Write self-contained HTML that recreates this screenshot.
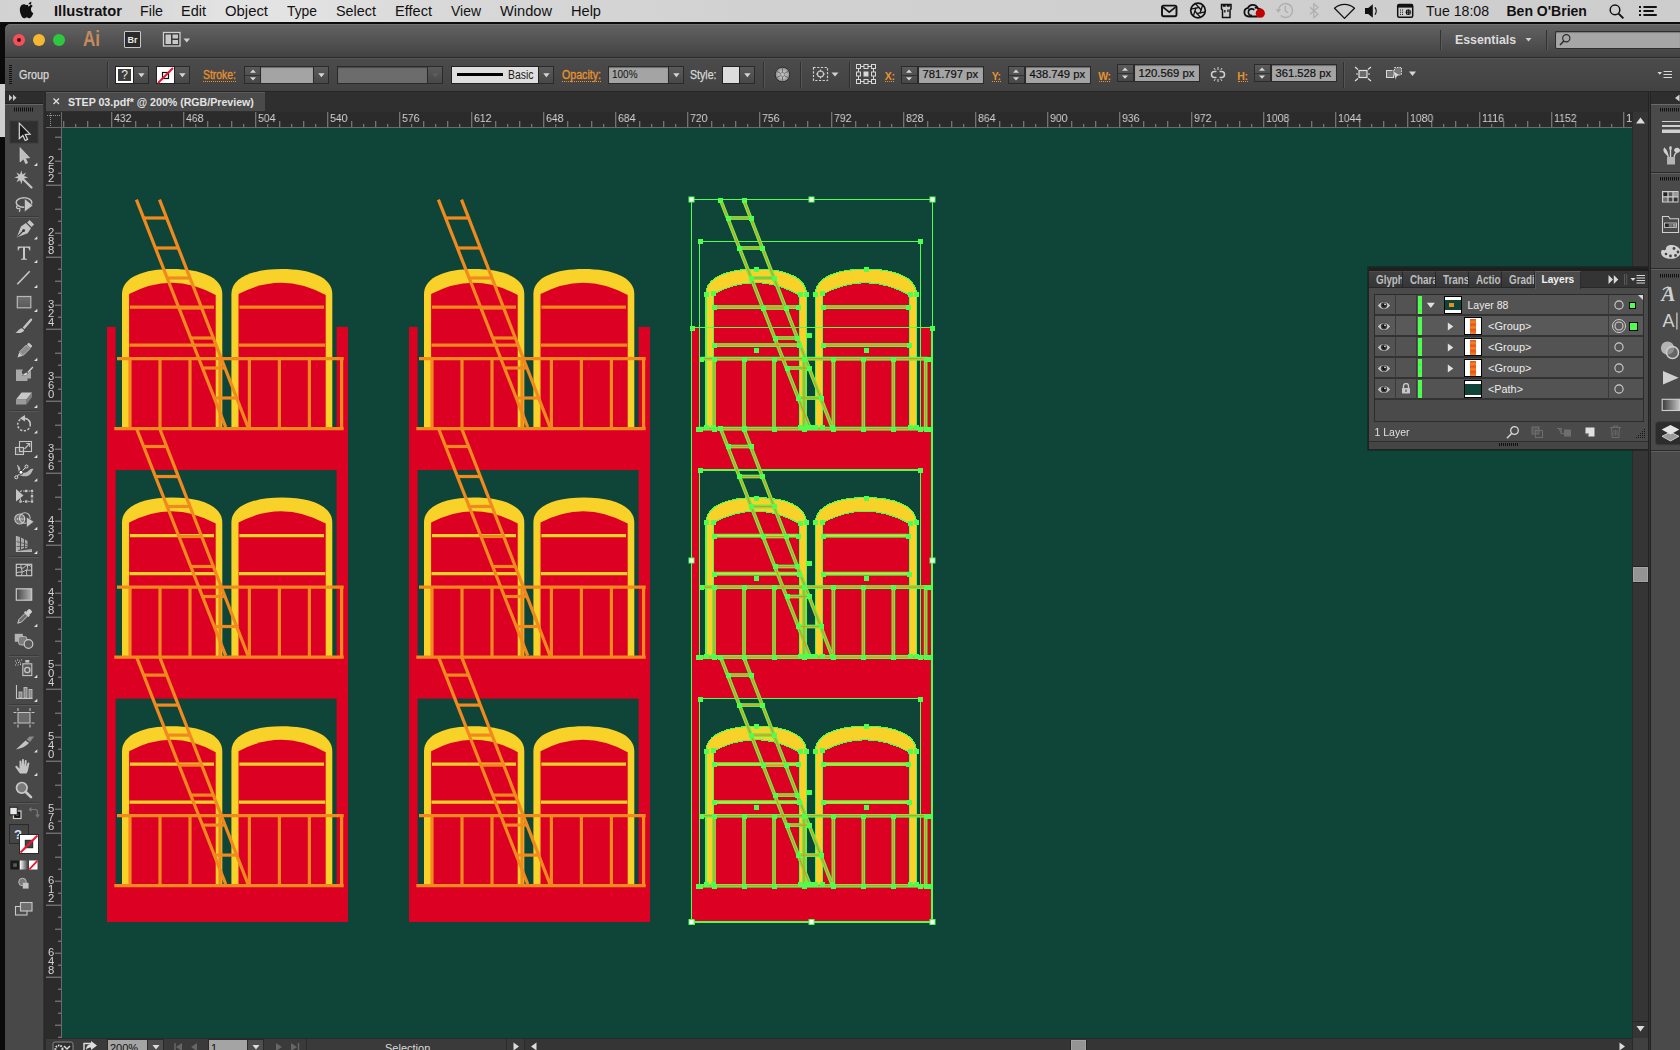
<!DOCTYPE html><html><head><meta charset="utf-8"><title>Illustrator</title><style>
*{box-sizing:border-box;margin:0;padding:0}
html,body{width:1680px;height:1050px;overflow:hidden;background:#000;font-family:"Liberation Sans",sans-serif;}
.a{position:absolute}
#menubar{left:0;top:0;width:1680px;height:24px;background:linear-gradient(90deg,#d2d2d2 0%,#d6d6d6 8%,#e2e2e2 13%,#e3e3e3 18%,#d9d9d9 25%,#d1d1d1 45%,#cdcdcd 100%);border-bottom:2px solid #0c0c0c}
#menubar span{position:absolute;top:2px;font-size:15px;color:#1a1a1a;white-space:nowrap;line-height:18px}
#appbar{left:5px;top:24px;width:1675px;height:34px;background:linear-gradient(#626262,#424242);border-top:1px solid #727272;border-bottom:1px solid #2a2a2a;border-top-left-radius:5px}
#ctrl{left:5px;top:58px;width:1675px;height:34px;background:linear-gradient(#4b4b4b,#424242);border-top:1px solid #555;border-bottom:1px solid #262626}
#tools{left:5px;top:92px;width:39px;height:958px;background:#484848}
#tabbar{left:46px;top:92px;width:1602px;height:20px;background:#2f2f2f}
#doctab{left:46px;top:92px;width:219px;height:19px;background:#4a4a4a;border-top:1px solid #5c5c5c}
#canvas{left:62px;top:128px;width:1570px;height:910px;background:#0f4538}
#hruler{left:46px;top:112px;width:1586px;height:16px;background:#2b2b2b;border-bottom:1px solid #6a6a6a}
#vruler{left:46px;top:128px;width:16px;height:910px;background:#2b2b2b;border-right:1px solid #6a6a6a}
#vscroll{left:1632px;top:112px;width:16px;height:926px;background:#353535}
#status{left:46px;top:1038px;width:1602px;height:12px;background:#3a3a3a}
#dock{left:1651px;top:104px;width:29px;height:946px;background:#4a4a4a;border-top:1px solid #6a6a6a}
.t{position:absolute;white-space:nowrap}
</style></head><body>
<div class="a" style="left:0;top:23px;width:5px;height:1027px;background:#0a0a0a"></div>
<div class="a" style="left:0;top:84px;width:5px;height:53px;background:#cfcfcf"></div>
<div class="a" style="left:44px;top:92px;width:2px;height:958px;background:#2a2a2a"></div>
<div class="a" style="left:1648px;top:92px;width:32px;height:958px;background:#2c2c2c"></div>
<div class="a" style="left:1648px;top:92px;width:3px;height:958px;background:#232323;z-index:3"></div><div class="a" style="left:1649px;top:92px;width:1px;height:958px;background:#333;z-index:3"></div>
<div id="menubar" class="a"></div>
<div id="appbar" class="a"></div>
<div id="ctrl" class="a"></div>
<div id="tools" class="a"></div>
<div id="tabbar" class="a"></div>
<div id="doctab" class="a"></div>
<div id="hruler" class="a"></div>
<div id="vruler" class="a"></div>
<div id="canvas" class="a"></div>
<div id="vscroll" class="a"></div>
<div id="status" class="a"></div>
<div id="dock" class="a"></div>
<svg class="a" style="left:62px;top:128px" width="1570" height="910" viewBox="62 128 1570 910" shape-rendering="auto">
<rect x="107" y="326.9" width="241" height="595.1" fill="#dc0023"/><rect x="115.6" y="241.4" width="221" height="187.2" fill="#0f4538"/><rect x="115.6" y="470" width="221" height="187.1" fill="#0f4538"/><rect x="115.6" y="698.6" width="221" height="187.1" fill="#0f4538"/><path d="M122,427.4 L122,294.1 C122,277.1 144.1,269.1 172.2,269.1 C200.2,269.1 222.3,277.1 222.3,294.1 L222.3,427.4 Z" fill="#f8d228"/><path d="M129.1,427.4 L129.1,294.1 Q172.4,270.7 215.7,295.1 L215.7,427.4 Z" fill="#dc0023"/><path d="M231.4,427.4 L231.4,294.1 C231.4,277.1 253.6,269.1 281.9,269.1 C310.1,269.1 332.3,277.1 332.3,294.1 L332.3,427.4 Z" fill="#f8d228"/><path d="M238.5,427.4 L238.5,294.1 Q282.1,270.7 325.7,295.1 L325.7,427.4 Z" fill="#dc0023"/><path d="M122,655.9 L122,522.6 C122,505.6 144.1,497.6 172.2,497.6 C200.2,497.6 222.3,505.6 222.3,522.6 L222.3,655.9 Z" fill="#f8d228"/><path d="M129.1,655.9 L129.1,522.6 Q172.4,499.2 215.7,523.6 L215.7,655.9 Z" fill="#dc0023"/><path d="M231.4,655.9 L231.4,522.6 C231.4,505.6 253.6,497.6 281.9,497.6 C310.1,497.6 332.3,505.6 332.3,522.6 L332.3,655.9 Z" fill="#f8d228"/><path d="M238.5,655.9 L238.5,522.6 Q282.1,499.2 325.7,523.6 L325.7,655.9 Z" fill="#dc0023"/><path d="M122,884.5 L122,751.2 C122,734.2 144.1,726.2 172.2,726.2 C200.2,726.2 222.3,734.2 222.3,751.2 L222.3,884.5 Z" fill="#f8d228"/><path d="M129.1,884.5 L129.1,751.2 Q172.4,727.8 215.7,752.2 L215.7,884.5 Z" fill="#dc0023"/><path d="M231.4,884.5 L231.4,751.2 C231.4,734.2 253.6,726.2 281.9,726.2 C310.1,726.2 332.3,734.2 332.3,751.2 L332.3,884.5 Z" fill="#f8d228"/><path d="M238.5,884.5 L238.5,751.2 Q282.1,727.8 325.7,752.2 L325.7,884.5 Z" fill="#dc0023"/><line x1="130" y1="307.1" x2="214" y2="307.1" stroke="#f08a1e" stroke-width="3.2"/><line x1="129.5" y1="345.1" x2="215.3" y2="345.1" stroke="#f08a1e" stroke-width="3.2"/><line x1="239.4" y1="307.1" x2="324" y2="307.1" stroke="#f08a1e" stroke-width="3.2"/><line x1="238.9" y1="345.1" x2="325.3" y2="345.1" stroke="#f08a1e" stroke-width="3.2"/><line x1="117" y1="358.6" x2="343.7" y2="358.6" stroke="#f08a1e" stroke-width="3.2"/><line x1="114.3" y1="428.6" x2="343.7" y2="428.6" stroke="#f08a1e" stroke-width="3.2"/><line x1="130" y1="358.6" x2="130" y2="428.6" stroke="#f08a1e" stroke-width="3.2"/><line x1="160" y1="358.6" x2="160" y2="428.6" stroke="#f08a1e" stroke-width="3.2"/><line x1="190" y1="358.6" x2="190" y2="428.6" stroke="#f08a1e" stroke-width="3.2"/><line x1="220" y1="358.6" x2="220" y2="428.6" stroke="#f08a1e" stroke-width="3.2"/><line x1="249.4" y1="358.6" x2="249.4" y2="428.6" stroke="#f08a1e" stroke-width="3.2"/><line x1="279.4" y1="358.6" x2="279.4" y2="428.6" stroke="#f08a1e" stroke-width="3.2"/><line x1="309.4" y1="358.6" x2="309.4" y2="428.6" stroke="#f08a1e" stroke-width="3.2"/><line x1="341.6" y1="358.6" x2="341.6" y2="428.6" stroke="#f08a1e" stroke-width="3.2"/><line x1="136.4" y1="199.6" x2="225.7" y2="427.1" stroke="#f08a1e" stroke-width="3.2"/><line x1="159.5" y1="199.6" x2="248" y2="427.1" stroke="#f08a1e" stroke-width="3.2"/><line x1="143.6" y1="218" x2="166.7" y2="218" stroke="#f08a1e" stroke-width="3.2"/><line x1="155.4" y1="248" x2="178.3" y2="248" stroke="#f08a1e" stroke-width="3.2"/><line x1="167.2" y1="278" x2="190" y2="278" stroke="#f08a1e" stroke-width="3.2"/><line x1="178.9" y1="308" x2="201.7" y2="308" stroke="#f08a1e" stroke-width="3.2"/><line x1="190.7" y1="338" x2="213.3" y2="338" stroke="#f08a1e" stroke-width="3.2"/><line x1="202.5" y1="368" x2="225" y2="368" stroke="#f08a1e" stroke-width="3.2"/><line x1="214.3" y1="398" x2="236.7" y2="398" stroke="#f08a1e" stroke-width="3.2"/><line x1="130" y1="535.6" x2="214" y2="535.6" stroke="#f8d228" stroke-width="3.2"/><line x1="129.5" y1="573.6" x2="215.3" y2="573.6" stroke="#f8d228" stroke-width="3.2"/><line x1="239.4" y1="535.6" x2="324" y2="535.6" stroke="#f8d228" stroke-width="3.2"/><line x1="238.9" y1="573.6" x2="325.3" y2="573.6" stroke="#f8d228" stroke-width="3.2"/><line x1="117" y1="587.1" x2="343.7" y2="587.1" stroke="#f08a1e" stroke-width="3.2"/><line x1="114.3" y1="657.1" x2="343.7" y2="657.1" stroke="#f08a1e" stroke-width="3.2"/><line x1="130" y1="587.1" x2="130" y2="657.1" stroke="#f08a1e" stroke-width="3.2"/><line x1="160" y1="587.1" x2="160" y2="657.1" stroke="#f08a1e" stroke-width="3.2"/><line x1="190" y1="587.1" x2="190" y2="657.1" stroke="#f08a1e" stroke-width="3.2"/><line x1="220" y1="587.1" x2="220" y2="657.1" stroke="#f08a1e" stroke-width="3.2"/><line x1="249.4" y1="587.1" x2="249.4" y2="657.1" stroke="#f08a1e" stroke-width="3.2"/><line x1="279.4" y1="587.1" x2="279.4" y2="657.1" stroke="#f08a1e" stroke-width="3.2"/><line x1="309.4" y1="587.1" x2="309.4" y2="657.1" stroke="#f08a1e" stroke-width="3.2"/><line x1="341.6" y1="587.1" x2="341.6" y2="657.1" stroke="#f08a1e" stroke-width="3.2"/><line x1="136.4" y1="428.1" x2="225.7" y2="655.6" stroke="#f08a1e" stroke-width="3.2"/><line x1="159.5" y1="428.1" x2="248" y2="655.6" stroke="#f08a1e" stroke-width="3.2"/><line x1="143.6" y1="446.5" x2="166.7" y2="446.5" stroke="#f08a1e" stroke-width="3.2"/><line x1="155.4" y1="476.5" x2="178.3" y2="476.5" stroke="#f08a1e" stroke-width="3.2"/><line x1="167.2" y1="506.5" x2="190" y2="506.5" stroke="#f08a1e" stroke-width="3.2"/><line x1="178.9" y1="536.5" x2="201.7" y2="536.5" stroke="#f08a1e" stroke-width="3.2"/><line x1="190.7" y1="566.5" x2="213.3" y2="566.5" stroke="#f08a1e" stroke-width="3.2"/><line x1="202.5" y1="596.5" x2="225" y2="596.5" stroke="#f08a1e" stroke-width="3.2"/><line x1="214.3" y1="626.5" x2="236.7" y2="626.5" stroke="#f08a1e" stroke-width="3.2"/><line x1="130" y1="764.2" x2="214" y2="764.2" stroke="#f8d228" stroke-width="3.2"/><line x1="129.5" y1="802.2" x2="215.3" y2="802.2" stroke="#f8d228" stroke-width="3.2"/><line x1="239.4" y1="764.2" x2="324" y2="764.2" stroke="#f8d228" stroke-width="3.2"/><line x1="238.9" y1="802.2" x2="325.3" y2="802.2" stroke="#f8d228" stroke-width="3.2"/><line x1="117" y1="815.7" x2="343.7" y2="815.7" stroke="#f08a1e" stroke-width="3.2"/><line x1="114.3" y1="885.7" x2="343.7" y2="885.7" stroke="#f08a1e" stroke-width="3.2"/><line x1="130" y1="815.7" x2="130" y2="885.7" stroke="#f08a1e" stroke-width="3.2"/><line x1="160" y1="815.7" x2="160" y2="885.7" stroke="#f08a1e" stroke-width="3.2"/><line x1="190" y1="815.7" x2="190" y2="885.7" stroke="#f08a1e" stroke-width="3.2"/><line x1="220" y1="815.7" x2="220" y2="885.7" stroke="#f08a1e" stroke-width="3.2"/><line x1="249.4" y1="815.7" x2="249.4" y2="885.7" stroke="#f08a1e" stroke-width="3.2"/><line x1="279.4" y1="815.7" x2="279.4" y2="885.7" stroke="#f08a1e" stroke-width="3.2"/><line x1="309.4" y1="815.7" x2="309.4" y2="885.7" stroke="#f08a1e" stroke-width="3.2"/><line x1="341.6" y1="815.7" x2="341.6" y2="885.7" stroke="#f08a1e" stroke-width="3.2"/><line x1="136.4" y1="656.7" x2="225.7" y2="884.2" stroke="#f08a1e" stroke-width="3.2"/><line x1="159.5" y1="656.7" x2="248" y2="884.2" stroke="#f08a1e" stroke-width="3.2"/><line x1="143.6" y1="675.1" x2="166.7" y2="675.1" stroke="#f08a1e" stroke-width="3.2"/><line x1="155.4" y1="705.1" x2="178.3" y2="705.1" stroke="#f08a1e" stroke-width="3.2"/><line x1="167.2" y1="735.1" x2="190" y2="735.1" stroke="#f08a1e" stroke-width="3.2"/><line x1="178.9" y1="765.1" x2="201.7" y2="765.1" stroke="#f08a1e" stroke-width="3.2"/><line x1="190.7" y1="795.1" x2="213.3" y2="795.1" stroke="#f08a1e" stroke-width="3.2"/><line x1="202.5" y1="825.1" x2="225" y2="825.1" stroke="#f08a1e" stroke-width="3.2"/><line x1="214.3" y1="855.1" x2="236.7" y2="855.1" stroke="#f08a1e" stroke-width="3.2"/>
<rect x="409" y="326.9" width="241" height="595.1" fill="#dc0023"/><rect x="417.6" y="241.4" width="221" height="187.2" fill="#0f4538"/><rect x="417.6" y="470" width="221" height="187.1" fill="#0f4538"/><rect x="417.6" y="698.6" width="221" height="187.1" fill="#0f4538"/><path d="M424,427.4 L424,294.1 C424,277.1 446.1,269.1 474.1,269.1 C502.2,269.1 524.3,277.1 524.3,294.1 L524.3,427.4 Z" fill="#f8d228"/><path d="M431.1,427.4 L431.1,294.1 Q474.4,270.7 517.7,295.1 L517.7,427.4 Z" fill="#dc0023"/><path d="M533.4,427.4 L533.4,294.1 C533.4,277.1 555.6,269.1 583.8,269.1 C612.1,269.1 634.3,277.1 634.3,294.1 L634.3,427.4 Z" fill="#f8d228"/><path d="M540.5,427.4 L540.5,294.1 Q584.1,270.7 627.7,295.1 L627.7,427.4 Z" fill="#dc0023"/><path d="M424,655.9 L424,522.6 C424,505.6 446.1,497.6 474.1,497.6 C502.2,497.6 524.3,505.6 524.3,522.6 L524.3,655.9 Z" fill="#f8d228"/><path d="M431.1,655.9 L431.1,522.6 Q474.4,499.2 517.7,523.6 L517.7,655.9 Z" fill="#dc0023"/><path d="M533.4,655.9 L533.4,522.6 C533.4,505.6 555.6,497.6 583.8,497.6 C612.1,497.6 634.3,505.6 634.3,522.6 L634.3,655.9 Z" fill="#f8d228"/><path d="M540.5,655.9 L540.5,522.6 Q584.1,499.2 627.7,523.6 L627.7,655.9 Z" fill="#dc0023"/><path d="M424,884.5 L424,751.2 C424,734.2 446.1,726.2 474.1,726.2 C502.2,726.2 524.3,734.2 524.3,751.2 L524.3,884.5 Z" fill="#f8d228"/><path d="M431.1,884.5 L431.1,751.2 Q474.4,727.8 517.7,752.2 L517.7,884.5 Z" fill="#dc0023"/><path d="M533.4,884.5 L533.4,751.2 C533.4,734.2 555.6,726.2 583.8,726.2 C612.1,726.2 634.3,734.2 634.3,751.2 L634.3,884.5 Z" fill="#f8d228"/><path d="M540.5,884.5 L540.5,751.2 Q584.1,727.8 627.7,752.2 L627.7,884.5 Z" fill="#dc0023"/><line x1="432" y1="307.1" x2="516" y2="307.1" stroke="#f08a1e" stroke-width="3.2"/><line x1="431.5" y1="345.1" x2="517.3" y2="345.1" stroke="#f08a1e" stroke-width="3.2"/><line x1="541.4" y1="307.1" x2="626" y2="307.1" stroke="#f08a1e" stroke-width="3.2"/><line x1="540.9" y1="345.1" x2="627.3" y2="345.1" stroke="#f08a1e" stroke-width="3.2"/><line x1="419" y1="358.6" x2="645.7" y2="358.6" stroke="#f08a1e" stroke-width="3.2"/><line x1="416.3" y1="428.6" x2="645.7" y2="428.6" stroke="#f08a1e" stroke-width="3.2"/><line x1="432" y1="358.6" x2="432" y2="428.6" stroke="#f08a1e" stroke-width="3.2"/><line x1="462" y1="358.6" x2="462" y2="428.6" stroke="#f08a1e" stroke-width="3.2"/><line x1="492" y1="358.6" x2="492" y2="428.6" stroke="#f08a1e" stroke-width="3.2"/><line x1="522" y1="358.6" x2="522" y2="428.6" stroke="#f08a1e" stroke-width="3.2"/><line x1="551.4" y1="358.6" x2="551.4" y2="428.6" stroke="#f08a1e" stroke-width="3.2"/><line x1="581.4" y1="358.6" x2="581.4" y2="428.6" stroke="#f08a1e" stroke-width="3.2"/><line x1="611.4" y1="358.6" x2="611.4" y2="428.6" stroke="#f08a1e" stroke-width="3.2"/><line x1="643.6" y1="358.6" x2="643.6" y2="428.6" stroke="#f08a1e" stroke-width="3.2"/><line x1="438.4" y1="199.6" x2="527.7" y2="427.1" stroke="#f08a1e" stroke-width="3.2"/><line x1="461.5" y1="199.6" x2="550" y2="427.1" stroke="#f08a1e" stroke-width="3.2"/><line x1="445.6" y1="218" x2="468.7" y2="218" stroke="#f08a1e" stroke-width="3.2"/><line x1="457.4" y1="248" x2="480.3" y2="248" stroke="#f08a1e" stroke-width="3.2"/><line x1="469.2" y1="278" x2="492" y2="278" stroke="#f08a1e" stroke-width="3.2"/><line x1="480.9" y1="308" x2="503.7" y2="308" stroke="#f08a1e" stroke-width="3.2"/><line x1="492.7" y1="338" x2="515.3" y2="338" stroke="#f08a1e" stroke-width="3.2"/><line x1="504.5" y1="368" x2="527" y2="368" stroke="#f08a1e" stroke-width="3.2"/><line x1="516.3" y1="398" x2="538.7" y2="398" stroke="#f08a1e" stroke-width="3.2"/><line x1="432" y1="535.6" x2="516" y2="535.6" stroke="#f8d228" stroke-width="3.2"/><line x1="431.5" y1="573.6" x2="517.3" y2="573.6" stroke="#f8d228" stroke-width="3.2"/><line x1="541.4" y1="535.6" x2="626" y2="535.6" stroke="#f8d228" stroke-width="3.2"/><line x1="540.9" y1="573.6" x2="627.3" y2="573.6" stroke="#f8d228" stroke-width="3.2"/><line x1="419" y1="587.1" x2="645.7" y2="587.1" stroke="#f08a1e" stroke-width="3.2"/><line x1="416.3" y1="657.1" x2="645.7" y2="657.1" stroke="#f08a1e" stroke-width="3.2"/><line x1="432" y1="587.1" x2="432" y2="657.1" stroke="#f08a1e" stroke-width="3.2"/><line x1="462" y1="587.1" x2="462" y2="657.1" stroke="#f08a1e" stroke-width="3.2"/><line x1="492" y1="587.1" x2="492" y2="657.1" stroke="#f08a1e" stroke-width="3.2"/><line x1="522" y1="587.1" x2="522" y2="657.1" stroke="#f08a1e" stroke-width="3.2"/><line x1="551.4" y1="587.1" x2="551.4" y2="657.1" stroke="#f08a1e" stroke-width="3.2"/><line x1="581.4" y1="587.1" x2="581.4" y2="657.1" stroke="#f08a1e" stroke-width="3.2"/><line x1="611.4" y1="587.1" x2="611.4" y2="657.1" stroke="#f08a1e" stroke-width="3.2"/><line x1="643.6" y1="587.1" x2="643.6" y2="657.1" stroke="#f08a1e" stroke-width="3.2"/><line x1="438.4" y1="428.1" x2="527.7" y2="655.6" stroke="#f08a1e" stroke-width="3.2"/><line x1="461.5" y1="428.1" x2="550" y2="655.6" stroke="#f08a1e" stroke-width="3.2"/><line x1="445.6" y1="446.5" x2="468.7" y2="446.5" stroke="#f08a1e" stroke-width="3.2"/><line x1="457.4" y1="476.5" x2="480.3" y2="476.5" stroke="#f08a1e" stroke-width="3.2"/><line x1="469.2" y1="506.5" x2="492" y2="506.5" stroke="#f08a1e" stroke-width="3.2"/><line x1="480.9" y1="536.5" x2="503.7" y2="536.5" stroke="#f08a1e" stroke-width="3.2"/><line x1="492.7" y1="566.5" x2="515.3" y2="566.5" stroke="#f08a1e" stroke-width="3.2"/><line x1="504.5" y1="596.5" x2="527" y2="596.5" stroke="#f08a1e" stroke-width="3.2"/><line x1="516.3" y1="626.5" x2="538.7" y2="626.5" stroke="#f08a1e" stroke-width="3.2"/><line x1="432" y1="764.2" x2="516" y2="764.2" stroke="#f8d228" stroke-width="3.2"/><line x1="431.5" y1="802.2" x2="517.3" y2="802.2" stroke="#f8d228" stroke-width="3.2"/><line x1="541.4" y1="764.2" x2="626" y2="764.2" stroke="#f8d228" stroke-width="3.2"/><line x1="540.9" y1="802.2" x2="627.3" y2="802.2" stroke="#f8d228" stroke-width="3.2"/><line x1="419" y1="815.7" x2="645.7" y2="815.7" stroke="#f08a1e" stroke-width="3.2"/><line x1="416.3" y1="885.7" x2="645.7" y2="885.7" stroke="#f08a1e" stroke-width="3.2"/><line x1="432" y1="815.7" x2="432" y2="885.7" stroke="#f08a1e" stroke-width="3.2"/><line x1="462" y1="815.7" x2="462" y2="885.7" stroke="#f08a1e" stroke-width="3.2"/><line x1="492" y1="815.7" x2="492" y2="885.7" stroke="#f08a1e" stroke-width="3.2"/><line x1="522" y1="815.7" x2="522" y2="885.7" stroke="#f08a1e" stroke-width="3.2"/><line x1="551.4" y1="815.7" x2="551.4" y2="885.7" stroke="#f08a1e" stroke-width="3.2"/><line x1="581.4" y1="815.7" x2="581.4" y2="885.7" stroke="#f08a1e" stroke-width="3.2"/><line x1="611.4" y1="815.7" x2="611.4" y2="885.7" stroke="#f08a1e" stroke-width="3.2"/><line x1="643.6" y1="815.7" x2="643.6" y2="885.7" stroke="#f08a1e" stroke-width="3.2"/><line x1="438.4" y1="656.7" x2="527.7" y2="884.2" stroke="#f08a1e" stroke-width="3.2"/><line x1="461.5" y1="656.7" x2="550" y2="884.2" stroke="#f08a1e" stroke-width="3.2"/><line x1="445.6" y1="675.1" x2="468.7" y2="675.1" stroke="#f08a1e" stroke-width="3.2"/><line x1="457.4" y1="705.1" x2="480.3" y2="705.1" stroke="#f08a1e" stroke-width="3.2"/><line x1="469.2" y1="735.1" x2="492" y2="735.1" stroke="#f08a1e" stroke-width="3.2"/><line x1="480.9" y1="765.1" x2="503.7" y2="765.1" stroke="#f08a1e" stroke-width="3.2"/><line x1="492.7" y1="795.1" x2="515.3" y2="795.1" stroke="#f08a1e" stroke-width="3.2"/><line x1="504.5" y1="825.1" x2="527" y2="825.1" stroke="#f08a1e" stroke-width="3.2"/><line x1="516.3" y1="855.1" x2="538.7" y2="855.1" stroke="#f08a1e" stroke-width="3.2"/>
<rect x="691" y="326.9" width="241" height="595.1" fill="#dc0023"/><rect x="699.6" y="241.4" width="221" height="187.2" fill="#0f4538"/><rect x="699.6" y="470" width="221" height="187.1" fill="#0f4538"/><rect x="699.6" y="698.6" width="221" height="187.1" fill="#0f4538"/><path d="M706,427.4 L706,294.1 C706,277.1 728.1,269.1 756.1,269.1 C784.2,269.1 806.3,277.1 806.3,294.1 L806.3,427.4 Z" fill="#f8d228"/><path d="M713.1,427.4 L713.1,294.1 Q756.4,270.7 799.7,295.1 L799.7,427.4 Z" fill="#dc0023"/><path d="M815.4,427.4 L815.4,294.1 C815.4,277.1 837.6,269.1 865.8,269.1 C894.1,269.1 916.3,277.1 916.3,294.1 L916.3,427.4 Z" fill="#f8d228"/><path d="M822.5,427.4 L822.5,294.1 Q866.1,270.7 909.7,295.1 L909.7,427.4 Z" fill="#dc0023"/><path d="M706,655.9 L706,522.6 C706,505.6 728.1,497.6 756.1,497.6 C784.2,497.6 806.3,505.6 806.3,522.6 L806.3,655.9 Z" fill="#f8d228"/><path d="M713.1,655.9 L713.1,522.6 Q756.4,499.2 799.7,523.6 L799.7,655.9 Z" fill="#dc0023"/><path d="M815.4,655.9 L815.4,522.6 C815.4,505.6 837.6,497.6 865.8,497.6 C894.1,497.6 916.3,505.6 916.3,522.6 L916.3,655.9 Z" fill="#f8d228"/><path d="M822.5,655.9 L822.5,522.6 Q866.1,499.2 909.7,523.6 L909.7,655.9 Z" fill="#dc0023"/><path d="M706,884.5 L706,751.2 C706,734.2 728.1,726.2 756.1,726.2 C784.2,726.2 806.3,734.2 806.3,751.2 L806.3,884.5 Z" fill="#f8d228"/><path d="M713.1,884.5 L713.1,751.2 Q756.4,727.8 799.7,752.2 L799.7,884.5 Z" fill="#dc0023"/><path d="M815.4,884.5 L815.4,751.2 C815.4,734.2 837.6,726.2 865.8,726.2 C894.1,726.2 916.3,734.2 916.3,751.2 L916.3,884.5 Z" fill="#f8d228"/><path d="M822.5,884.5 L822.5,751.2 Q866.1,727.8 909.7,752.2 L909.7,884.5 Z" fill="#dc0023"/><line x1="714" y1="307.1" x2="798" y2="307.1" stroke="#f08a1e" stroke-width="3.2"/><line x1="713.5" y1="345.1" x2="799.3" y2="345.1" stroke="#f08a1e" stroke-width="3.2"/><line x1="823.4" y1="307.1" x2="908" y2="307.1" stroke="#f08a1e" stroke-width="3.2"/><line x1="822.9" y1="345.1" x2="909.3" y2="345.1" stroke="#f08a1e" stroke-width="3.2"/><line x1="701" y1="358.6" x2="927.7" y2="358.6" stroke="#f08a1e" stroke-width="3.2"/><line x1="698.3" y1="428.6" x2="927.7" y2="428.6" stroke="#f08a1e" stroke-width="3.2"/><line x1="714" y1="358.6" x2="714" y2="428.6" stroke="#f08a1e" stroke-width="3.2"/><line x1="744" y1="358.6" x2="744" y2="428.6" stroke="#f08a1e" stroke-width="3.2"/><line x1="774" y1="358.6" x2="774" y2="428.6" stroke="#f08a1e" stroke-width="3.2"/><line x1="804" y1="358.6" x2="804" y2="428.6" stroke="#f08a1e" stroke-width="3.2"/><line x1="833.4" y1="358.6" x2="833.4" y2="428.6" stroke="#f08a1e" stroke-width="3.2"/><line x1="863.4" y1="358.6" x2="863.4" y2="428.6" stroke="#f08a1e" stroke-width="3.2"/><line x1="893.4" y1="358.6" x2="893.4" y2="428.6" stroke="#f08a1e" stroke-width="3.2"/><line x1="925.6" y1="358.6" x2="925.6" y2="428.6" stroke="#f08a1e" stroke-width="3.2"/><line x1="720.4" y1="199.6" x2="809.7" y2="427.1" stroke="#f08a1e" stroke-width="3.2"/><line x1="743.5" y1="199.6" x2="832" y2="427.1" stroke="#f08a1e" stroke-width="3.2"/><line x1="727.6" y1="218" x2="750.7" y2="218" stroke="#f08a1e" stroke-width="3.2"/><line x1="739.4" y1="248" x2="762.3" y2="248" stroke="#f08a1e" stroke-width="3.2"/><line x1="751.2" y1="278" x2="774" y2="278" stroke="#f08a1e" stroke-width="3.2"/><line x1="762.9" y1="308" x2="785.7" y2="308" stroke="#f08a1e" stroke-width="3.2"/><line x1="774.7" y1="338" x2="797.3" y2="338" stroke="#f08a1e" stroke-width="3.2"/><line x1="786.5" y1="368" x2="809" y2="368" stroke="#f08a1e" stroke-width="3.2"/><line x1="798.3" y1="398" x2="820.7" y2="398" stroke="#f08a1e" stroke-width="3.2"/><line x1="714" y1="535.6" x2="798" y2="535.6" stroke="#f8d228" stroke-width="3.2"/><line x1="713.5" y1="573.6" x2="799.3" y2="573.6" stroke="#f8d228" stroke-width="3.2"/><line x1="823.4" y1="535.6" x2="908" y2="535.6" stroke="#f8d228" stroke-width="3.2"/><line x1="822.9" y1="573.6" x2="909.3" y2="573.6" stroke="#f8d228" stroke-width="3.2"/><line x1="701" y1="587.1" x2="927.7" y2="587.1" stroke="#f08a1e" stroke-width="3.2"/><line x1="698.3" y1="657.1" x2="927.7" y2="657.1" stroke="#f08a1e" stroke-width="3.2"/><line x1="714" y1="587.1" x2="714" y2="657.1" stroke="#f08a1e" stroke-width="3.2"/><line x1="744" y1="587.1" x2="744" y2="657.1" stroke="#f08a1e" stroke-width="3.2"/><line x1="774" y1="587.1" x2="774" y2="657.1" stroke="#f08a1e" stroke-width="3.2"/><line x1="804" y1="587.1" x2="804" y2="657.1" stroke="#f08a1e" stroke-width="3.2"/><line x1="833.4" y1="587.1" x2="833.4" y2="657.1" stroke="#f08a1e" stroke-width="3.2"/><line x1="863.4" y1="587.1" x2="863.4" y2="657.1" stroke="#f08a1e" stroke-width="3.2"/><line x1="893.4" y1="587.1" x2="893.4" y2="657.1" stroke="#f08a1e" stroke-width="3.2"/><line x1="925.6" y1="587.1" x2="925.6" y2="657.1" stroke="#f08a1e" stroke-width="3.2"/><line x1="720.4" y1="428.1" x2="809.7" y2="655.6" stroke="#f08a1e" stroke-width="3.2"/><line x1="743.5" y1="428.1" x2="832" y2="655.6" stroke="#f08a1e" stroke-width="3.2"/><line x1="727.6" y1="446.5" x2="750.7" y2="446.5" stroke="#f08a1e" stroke-width="3.2"/><line x1="739.4" y1="476.5" x2="762.3" y2="476.5" stroke="#f08a1e" stroke-width="3.2"/><line x1="751.2" y1="506.5" x2="774" y2="506.5" stroke="#f08a1e" stroke-width="3.2"/><line x1="762.9" y1="536.5" x2="785.7" y2="536.5" stroke="#f08a1e" stroke-width="3.2"/><line x1="774.7" y1="566.5" x2="797.3" y2="566.5" stroke="#f08a1e" stroke-width="3.2"/><line x1="786.5" y1="596.5" x2="809" y2="596.5" stroke="#f08a1e" stroke-width="3.2"/><line x1="798.3" y1="626.5" x2="820.7" y2="626.5" stroke="#f08a1e" stroke-width="3.2"/><line x1="714" y1="764.2" x2="798" y2="764.2" stroke="#f8d228" stroke-width="3.2"/><line x1="713.5" y1="802.2" x2="799.3" y2="802.2" stroke="#f8d228" stroke-width="3.2"/><line x1="823.4" y1="764.2" x2="908" y2="764.2" stroke="#f8d228" stroke-width="3.2"/><line x1="822.9" y1="802.2" x2="909.3" y2="802.2" stroke="#f8d228" stroke-width="3.2"/><line x1="701" y1="815.7" x2="927.7" y2="815.7" stroke="#f08a1e" stroke-width="3.2"/><line x1="698.3" y1="885.7" x2="927.7" y2="885.7" stroke="#f08a1e" stroke-width="3.2"/><line x1="714" y1="815.7" x2="714" y2="885.7" stroke="#f08a1e" stroke-width="3.2"/><line x1="744" y1="815.7" x2="744" y2="885.7" stroke="#f08a1e" stroke-width="3.2"/><line x1="774" y1="815.7" x2="774" y2="885.7" stroke="#f08a1e" stroke-width="3.2"/><line x1="804" y1="815.7" x2="804" y2="885.7" stroke="#f08a1e" stroke-width="3.2"/><line x1="833.4" y1="815.7" x2="833.4" y2="885.7" stroke="#f08a1e" stroke-width="3.2"/><line x1="863.4" y1="815.7" x2="863.4" y2="885.7" stroke="#f08a1e" stroke-width="3.2"/><line x1="893.4" y1="815.7" x2="893.4" y2="885.7" stroke="#f08a1e" stroke-width="3.2"/><line x1="925.6" y1="815.7" x2="925.6" y2="885.7" stroke="#f08a1e" stroke-width="3.2"/><line x1="720.4" y1="656.7" x2="809.7" y2="884.2" stroke="#f08a1e" stroke-width="3.2"/><line x1="743.5" y1="656.7" x2="832" y2="884.2" stroke="#f08a1e" stroke-width="3.2"/><line x1="727.6" y1="675.1" x2="750.7" y2="675.1" stroke="#f08a1e" stroke-width="3.2"/><line x1="739.4" y1="705.1" x2="762.3" y2="705.1" stroke="#f08a1e" stroke-width="3.2"/><line x1="751.2" y1="735.1" x2="774" y2="735.1" stroke="#f08a1e" stroke-width="3.2"/><line x1="762.9" y1="765.1" x2="785.7" y2="765.1" stroke="#f08a1e" stroke-width="3.2"/><line x1="774.7" y1="795.1" x2="797.3" y2="795.1" stroke="#f08a1e" stroke-width="3.2"/><line x1="786.5" y1="825.1" x2="809" y2="825.1" stroke="#f08a1e" stroke-width="3.2"/><line x1="798.3" y1="855.1" x2="820.7" y2="855.1" stroke="#f08a1e" stroke-width="3.2"/><g fill="none" stroke="#4fff4f" stroke-width="1.15" shape-rendering="crispEdges"><rect x="691.5" y="327.5" width="240" height="594"/><rect x="699.9" y="241.4" width="220.5" height="187.2"/><rect x="699.9" y="470" width="220.5" height="187.1"/><rect x="699.9" y="698.6" width="220.5" height="187.1"/><path d="M706,427.4 L706,294.1 C706,277.1 728.1,269.1 756.1,269.1 C784.2,269.1 806.3,277.1 806.3,294.1 L806.3,427.4 Z"/><path d="M713.1,427.4 L713.1,294.1 Q756.4,270.7 799.7,295.1 L799.7,427.4 Z"/><path d="M815.4,427.4 L815.4,294.1 C815.4,277.1 837.6,269.1 865.8,269.1 C894.1,269.1 916.3,277.1 916.3,294.1 L916.3,427.4 Z"/><path d="M822.5,427.4 L822.5,294.1 Q866.1,270.7 909.7,295.1 L909.7,427.4 Z"/><path d="M706,655.9 L706,522.6 C706,505.6 728.1,497.6 756.1,497.6 C784.2,497.6 806.3,505.6 806.3,522.6 L806.3,655.9 Z"/><path d="M713.1,655.9 L713.1,522.6 Q756.4,499.2 799.7,523.6 L799.7,655.9 Z"/><path d="M815.4,655.9 L815.4,522.6 C815.4,505.6 837.6,497.6 865.8,497.6 C894.1,497.6 916.3,505.6 916.3,522.6 L916.3,655.9 Z"/><path d="M822.5,655.9 L822.5,522.6 Q866.1,499.2 909.7,523.6 L909.7,655.9 Z"/><path d="M706,884.5 L706,751.2 C706,734.2 728.1,726.2 756.1,726.2 C784.2,726.2 806.3,734.2 806.3,751.2 L806.3,884.5 Z"/><path d="M713.1,884.5 L713.1,751.2 Q756.4,727.8 799.7,752.2 L799.7,884.5 Z"/><path d="M815.4,884.5 L815.4,751.2 C815.4,734.2 837.6,726.2 865.8,726.2 C894.1,726.2 916.3,734.2 916.3,751.2 L916.3,884.5 Z"/><path d="M822.5,884.5 L822.5,751.2 Q866.1,727.8 909.7,752.2 L909.7,884.5 Z"/></g><g stroke="#4fff4f" stroke-width="3.6"><line x1="714" y1="307.1" x2="798" y2="307.1"/><line x1="713.5" y1="345.1" x2="799.3" y2="345.1"/><line x1="823.4" y1="307.1" x2="908" y2="307.1"/><line x1="822.9" y1="345.1" x2="909.3" y2="345.1"/><line x1="701" y1="358.6" x2="927.7" y2="358.6"/><line x1="698.3" y1="428.6" x2="927.7" y2="428.6"/><line x1="714" y1="358.6" x2="714" y2="428.6"/><line x1="744" y1="358.6" x2="744" y2="428.6"/><line x1="774" y1="358.6" x2="774" y2="428.6"/><line x1="804" y1="358.6" x2="804" y2="428.6"/><line x1="833.4" y1="358.6" x2="833.4" y2="428.6"/><line x1="863.4" y1="358.6" x2="863.4" y2="428.6"/><line x1="893.4" y1="358.6" x2="893.4" y2="428.6"/><line x1="925.6" y1="358.6" x2="925.6" y2="428.6"/><line x1="720.4" y1="199.6" x2="809.7" y2="427.1"/><line x1="743.5" y1="199.6" x2="832" y2="427.1"/><line x1="727.6" y1="218" x2="750.7" y2="218"/><line x1="739.4" y1="248" x2="762.3" y2="248"/><line x1="751.2" y1="278" x2="774" y2="278"/><line x1="762.9" y1="308" x2="785.7" y2="308"/><line x1="774.7" y1="338" x2="797.3" y2="338"/><line x1="786.5" y1="368" x2="809" y2="368"/><line x1="798.3" y1="398" x2="820.7" y2="398"/><line x1="714" y1="535.6" x2="798" y2="535.6"/><line x1="713.5" y1="573.6" x2="799.3" y2="573.6"/><line x1="823.4" y1="535.6" x2="908" y2="535.6"/><line x1="822.9" y1="573.6" x2="909.3" y2="573.6"/><line x1="701" y1="587.1" x2="927.7" y2="587.1"/><line x1="698.3" y1="657.1" x2="927.7" y2="657.1"/><line x1="714" y1="587.1" x2="714" y2="657.1"/><line x1="744" y1="587.1" x2="744" y2="657.1"/><line x1="774" y1="587.1" x2="774" y2="657.1"/><line x1="804" y1="587.1" x2="804" y2="657.1"/><line x1="833.4" y1="587.1" x2="833.4" y2="657.1"/><line x1="863.4" y1="587.1" x2="863.4" y2="657.1"/><line x1="893.4" y1="587.1" x2="893.4" y2="657.1"/><line x1="925.6" y1="587.1" x2="925.6" y2="657.1"/><line x1="720.4" y1="428.1" x2="809.7" y2="655.6"/><line x1="743.5" y1="428.1" x2="832" y2="655.6"/><line x1="727.6" y1="446.5" x2="750.7" y2="446.5"/><line x1="739.4" y1="476.5" x2="762.3" y2="476.5"/><line x1="751.2" y1="506.5" x2="774" y2="506.5"/><line x1="762.9" y1="536.5" x2="785.7" y2="536.5"/><line x1="774.7" y1="566.5" x2="797.3" y2="566.5"/><line x1="786.5" y1="596.5" x2="809" y2="596.5"/><line x1="798.3" y1="626.5" x2="820.7" y2="626.5"/><line x1="714" y1="764.2" x2="798" y2="764.2"/><line x1="713.5" y1="802.2" x2="799.3" y2="802.2"/><line x1="823.4" y1="764.2" x2="908" y2="764.2"/><line x1="822.9" y1="802.2" x2="909.3" y2="802.2"/><line x1="701" y1="815.7" x2="927.7" y2="815.7"/><line x1="698.3" y1="885.7" x2="927.7" y2="885.7"/><line x1="714" y1="815.7" x2="714" y2="885.7"/><line x1="744" y1="815.7" x2="744" y2="885.7"/><line x1="774" y1="815.7" x2="774" y2="885.7"/><line x1="804" y1="815.7" x2="804" y2="885.7"/><line x1="833.4" y1="815.7" x2="833.4" y2="885.7"/><line x1="863.4" y1="815.7" x2="863.4" y2="885.7"/><line x1="893.4" y1="815.7" x2="893.4" y2="885.7"/><line x1="925.6" y1="815.7" x2="925.6" y2="885.7"/><line x1="720.4" y1="656.7" x2="809.7" y2="884.2"/><line x1="743.5" y1="656.7" x2="832" y2="884.2"/><line x1="727.6" y1="675.1" x2="750.7" y2="675.1"/><line x1="739.4" y1="705.1" x2="762.3" y2="705.1"/><line x1="751.2" y1="735.1" x2="774" y2="735.1"/><line x1="762.9" y1="765.1" x2="785.7" y2="765.1"/><line x1="774.7" y1="795.1" x2="797.3" y2="795.1"/><line x1="786.5" y1="825.1" x2="809" y2="825.1"/><line x1="798.3" y1="855.1" x2="820.7" y2="855.1"/></g><g stroke-width="1.3"><line x1="714" y1="307.1" x2="798" y2="307.1" stroke="#f08a1e"/><line x1="713.5" y1="345.1" x2="799.3" y2="345.1" stroke="#f08a1e"/><line x1="823.4" y1="307.1" x2="908" y2="307.1" stroke="#f08a1e"/><line x1="822.9" y1="345.1" x2="909.3" y2="345.1" stroke="#f08a1e"/><line x1="701" y1="358.6" x2="927.7" y2="358.6" stroke="#f08a1e"/><line x1="698.3" y1="428.6" x2="927.7" y2="428.6" stroke="#f08a1e"/><line x1="714" y1="358.6" x2="714" y2="428.6" stroke="#f08a1e"/><line x1="744" y1="358.6" x2="744" y2="428.6" stroke="#f08a1e"/><line x1="774" y1="358.6" x2="774" y2="428.6" stroke="#f08a1e"/><line x1="804" y1="358.6" x2="804" y2="428.6" stroke="#f08a1e"/><line x1="833.4" y1="358.6" x2="833.4" y2="428.6" stroke="#f08a1e"/><line x1="863.4" y1="358.6" x2="863.4" y2="428.6" stroke="#f08a1e"/><line x1="893.4" y1="358.6" x2="893.4" y2="428.6" stroke="#f08a1e"/><line x1="925.6" y1="358.6" x2="925.6" y2="428.6" stroke="#f08a1e"/><line x1="720.4" y1="199.6" x2="809.7" y2="427.1" stroke="#f08a1e"/><line x1="743.5" y1="199.6" x2="832" y2="427.1" stroke="#f08a1e"/><line x1="727.6" y1="218" x2="750.7" y2="218" stroke="#f08a1e"/><line x1="739.4" y1="248" x2="762.3" y2="248" stroke="#f08a1e"/><line x1="751.2" y1="278" x2="774" y2="278" stroke="#f08a1e"/><line x1="762.9" y1="308" x2="785.7" y2="308" stroke="#f08a1e"/><line x1="774.7" y1="338" x2="797.3" y2="338" stroke="#f08a1e"/><line x1="786.5" y1="368" x2="809" y2="368" stroke="#f08a1e"/><line x1="798.3" y1="398" x2="820.7" y2="398" stroke="#f08a1e"/><line x1="714" y1="535.6" x2="798" y2="535.6" stroke="#f8d228"/><line x1="713.5" y1="573.6" x2="799.3" y2="573.6" stroke="#f8d228"/><line x1="823.4" y1="535.6" x2="908" y2="535.6" stroke="#f8d228"/><line x1="822.9" y1="573.6" x2="909.3" y2="573.6" stroke="#f8d228"/><line x1="701" y1="587.1" x2="927.7" y2="587.1" stroke="#f08a1e"/><line x1="698.3" y1="657.1" x2="927.7" y2="657.1" stroke="#f08a1e"/><line x1="714" y1="587.1" x2="714" y2="657.1" stroke="#f08a1e"/><line x1="744" y1="587.1" x2="744" y2="657.1" stroke="#f08a1e"/><line x1="774" y1="587.1" x2="774" y2="657.1" stroke="#f08a1e"/><line x1="804" y1="587.1" x2="804" y2="657.1" stroke="#f08a1e"/><line x1="833.4" y1="587.1" x2="833.4" y2="657.1" stroke="#f08a1e"/><line x1="863.4" y1="587.1" x2="863.4" y2="657.1" stroke="#f08a1e"/><line x1="893.4" y1="587.1" x2="893.4" y2="657.1" stroke="#f08a1e"/><line x1="925.6" y1="587.1" x2="925.6" y2="657.1" stroke="#f08a1e"/><line x1="720.4" y1="428.1" x2="809.7" y2="655.6" stroke="#f08a1e"/><line x1="743.5" y1="428.1" x2="832" y2="655.6" stroke="#f08a1e"/><line x1="727.6" y1="446.5" x2="750.7" y2="446.5" stroke="#f08a1e"/><line x1="739.4" y1="476.5" x2="762.3" y2="476.5" stroke="#f08a1e"/><line x1="751.2" y1="506.5" x2="774" y2="506.5" stroke="#f08a1e"/><line x1="762.9" y1="536.5" x2="785.7" y2="536.5" stroke="#f08a1e"/><line x1="774.7" y1="566.5" x2="797.3" y2="566.5" stroke="#f08a1e"/><line x1="786.5" y1="596.5" x2="809" y2="596.5" stroke="#f08a1e"/><line x1="798.3" y1="626.5" x2="820.7" y2="626.5" stroke="#f08a1e"/><line x1="714" y1="764.2" x2="798" y2="764.2" stroke="#f8d228"/><line x1="713.5" y1="802.2" x2="799.3" y2="802.2" stroke="#f8d228"/><line x1="823.4" y1="764.2" x2="908" y2="764.2" stroke="#f8d228"/><line x1="822.9" y1="802.2" x2="909.3" y2="802.2" stroke="#f8d228"/><line x1="701" y1="815.7" x2="927.7" y2="815.7" stroke="#f08a1e"/><line x1="698.3" y1="885.7" x2="927.7" y2="885.7" stroke="#f08a1e"/><line x1="714" y1="815.7" x2="714" y2="885.7" stroke="#f08a1e"/><line x1="744" y1="815.7" x2="744" y2="885.7" stroke="#f08a1e"/><line x1="774" y1="815.7" x2="774" y2="885.7" stroke="#f08a1e"/><line x1="804" y1="815.7" x2="804" y2="885.7" stroke="#f08a1e"/><line x1="833.4" y1="815.7" x2="833.4" y2="885.7" stroke="#f08a1e"/><line x1="863.4" y1="815.7" x2="863.4" y2="885.7" stroke="#f08a1e"/><line x1="893.4" y1="815.7" x2="893.4" y2="885.7" stroke="#f08a1e"/><line x1="925.6" y1="815.7" x2="925.6" y2="885.7" stroke="#f08a1e"/><line x1="720.4" y1="656.7" x2="809.7" y2="884.2" stroke="#f08a1e"/><line x1="743.5" y1="656.7" x2="832" y2="884.2" stroke="#f08a1e"/><line x1="727.6" y1="675.1" x2="750.7" y2="675.1" stroke="#f08a1e"/><line x1="739.4" y1="705.1" x2="762.3" y2="705.1" stroke="#f08a1e"/><line x1="751.2" y1="735.1" x2="774" y2="735.1" stroke="#f08a1e"/><line x1="762.9" y1="765.1" x2="785.7" y2="765.1" stroke="#f08a1e"/><line x1="774.7" y1="795.1" x2="797.3" y2="795.1" stroke="#f08a1e"/><line x1="786.5" y1="825.1" x2="809" y2="825.1" stroke="#f08a1e"/><line x1="798.3" y1="855.1" x2="820.7" y2="855.1" stroke="#f08a1e"/></g><g fill="#4fff4f" shape-rendering="crispEdges"><rect x="689.5" y="325.5" width="5" height="5"/><rect x="929.5" y="325.5" width="5" height="5"/><rect x="689.5" y="919.5" width="5" height="5"/><rect x="929.5" y="919.5" width="5" height="5"/><rect x="697.5" y="238.5" width="5" height="5"/><rect x="917.5" y="238.5" width="5" height="5"/><rect x="697.5" y="426.5" width="5" height="5"/><rect x="917.5" y="426.5" width="5" height="5"/><rect x="697.5" y="467.5" width="5" height="5"/><rect x="917.5" y="467.5" width="5" height="5"/><rect x="697.5" y="654.5" width="5" height="5"/><rect x="917.5" y="654.5" width="5" height="5"/><rect x="697.5" y="696.5" width="5" height="5"/><rect x="917.5" y="696.5" width="5" height="5"/><rect x="697.5" y="883.5" width="5" height="5"/><rect x="917.5" y="883.5" width="5" height="5"/><rect x="703.5" y="291.5" width="5" height="5"/><rect x="803.5" y="291.5" width="5" height="5"/><rect x="753.5" y="266.5" width="5" height="5"/><rect x="703.5" y="424.5" width="5" height="5"/><rect x="803.5" y="424.5" width="5" height="5"/><rect x="710.5" y="290.5" width="5" height="5"/><rect x="797.5" y="291.5" width="5" height="5"/><rect x="710.5" y="424.5" width="5" height="5"/><rect x="797.5" y="424.5" width="5" height="5"/><rect x="753.5" y="347.5" width="5" height="5"/><rect x="812.5" y="291.5" width="5" height="5"/><rect x="913.5" y="291.5" width="5" height="5"/><rect x="863.5" y="266.5" width="5" height="5"/><rect x="812.5" y="424.5" width="5" height="5"/><rect x="913.5" y="424.5" width="5" height="5"/><rect x="819.5" y="290.5" width="5" height="5"/><rect x="907.5" y="291.5" width="5" height="5"/><rect x="819.5" y="424.5" width="5" height="5"/><rect x="907.5" y="424.5" width="5" height="5"/><rect x="863.5" y="347.5" width="5" height="5"/><rect x="806.5" y="332.5" width="5" height="5"/><rect x="703.5" y="519.5" width="5" height="5"/><rect x="803.5" y="519.5" width="5" height="5"/><rect x="753.5" y="495.5" width="5" height="5"/><rect x="703.5" y="653.5" width="5" height="5"/><rect x="803.5" y="653.5" width="5" height="5"/><rect x="710.5" y="519.5" width="5" height="5"/><rect x="797.5" y="520.5" width="5" height="5"/><rect x="710.5" y="653.5" width="5" height="5"/><rect x="797.5" y="653.5" width="5" height="5"/><rect x="753.5" y="575.5" width="5" height="5"/><rect x="812.5" y="519.5" width="5" height="5"/><rect x="913.5" y="519.5" width="5" height="5"/><rect x="863.5" y="495.5" width="5" height="5"/><rect x="812.5" y="653.5" width="5" height="5"/><rect x="913.5" y="653.5" width="5" height="5"/><rect x="819.5" y="519.5" width="5" height="5"/><rect x="907.5" y="520.5" width="5" height="5"/><rect x="819.5" y="653.5" width="5" height="5"/><rect x="907.5" y="653.5" width="5" height="5"/><rect x="863.5" y="575.5" width="5" height="5"/><rect x="806.5" y="560.5" width="5" height="5"/><rect x="703.5" y="748.5" width="5" height="5"/><rect x="803.5" y="748.5" width="5" height="5"/><rect x="753.5" y="723.5" width="5" height="5"/><rect x="703.5" y="881.5" width="5" height="5"/><rect x="803.5" y="881.5" width="5" height="5"/><rect x="710.5" y="747.5" width="5" height="5"/><rect x="797.5" y="748.5" width="5" height="5"/><rect x="710.5" y="881.5" width="5" height="5"/><rect x="797.5" y="881.5" width="5" height="5"/><rect x="753.5" y="804.5" width="5" height="5"/><rect x="812.5" y="748.5" width="5" height="5"/><rect x="913.5" y="748.5" width="5" height="5"/><rect x="863.5" y="723.5" width="5" height="5"/><rect x="812.5" y="881.5" width="5" height="5"/><rect x="913.5" y="881.5" width="5" height="5"/><rect x="819.5" y="747.5" width="5" height="5"/><rect x="907.5" y="748.5" width="5" height="5"/><rect x="819.5" y="881.5" width="5" height="5"/><rect x="907.5" y="881.5" width="5" height="5"/><rect x="863.5" y="804.5" width="5" height="5"/><rect x="806.5" y="789.5" width="5" height="5"/><rect x="711.5" y="304.5" width="5" height="5"/><rect x="795.5" y="304.5" width="5" height="5"/><rect x="711.5" y="342.5" width="5" height="5"/><rect x="796.5" y="342.5" width="5" height="5"/><rect x="820.5" y="304.5" width="5" height="5"/><rect x="905.5" y="304.5" width="5" height="5"/><rect x="820.5" y="342.5" width="5" height="5"/><rect x="906.5" y="342.5" width="5" height="5"/><rect x="698.5" y="356.5" width="5" height="5"/><rect x="925.5" y="356.5" width="5" height="5"/><rect x="695.5" y="426.5" width="5" height="5"/><rect x="925.5" y="426.5" width="5" height="5"/><rect x="711.5" y="356.5" width="5" height="5"/><rect x="711.5" y="426.5" width="5" height="5"/><rect x="741.5" y="356.5" width="5" height="5"/><rect x="741.5" y="426.5" width="5" height="5"/><rect x="771.5" y="356.5" width="5" height="5"/><rect x="771.5" y="426.5" width="5" height="5"/><rect x="801.5" y="356.5" width="5" height="5"/><rect x="801.5" y="426.5" width="5" height="5"/><rect x="830.5" y="356.5" width="5" height="5"/><rect x="830.5" y="426.5" width="5" height="5"/><rect x="860.5" y="356.5" width="5" height="5"/><rect x="860.5" y="426.5" width="5" height="5"/><rect x="890.5" y="356.5" width="5" height="5"/><rect x="890.5" y="426.5" width="5" height="5"/><rect x="923.5" y="356.5" width="5" height="5"/><rect x="923.5" y="426.5" width="5" height="5"/><rect x="717.5" y="197.5" width="5" height="5"/><rect x="807.5" y="424.5" width="5" height="5"/><rect x="741.5" y="197.5" width="5" height="5"/><rect x="829.5" y="424.5" width="5" height="5"/><rect x="725.5" y="215.5" width="5" height="5"/><rect x="748.5" y="215.5" width="5" height="5"/><rect x="736.5" y="245.5" width="5" height="5"/><rect x="759.5" y="245.5" width="5" height="5"/><rect x="748.5" y="275.5" width="5" height="5"/><rect x="771.5" y="275.5" width="5" height="5"/><rect x="760.5" y="305.5" width="5" height="5"/><rect x="783.5" y="305.5" width="5" height="5"/><rect x="772.5" y="335.5" width="5" height="5"/><rect x="794.5" y="335.5" width="5" height="5"/><rect x="784.5" y="365.5" width="5" height="5"/><rect x="806.5" y="365.5" width="5" height="5"/><rect x="795.5" y="395.5" width="5" height="5"/><rect x="818.5" y="395.5" width="5" height="5"/><rect x="711.5" y="533.5" width="5" height="5"/><rect x="795.5" y="533.5" width="5" height="5"/><rect x="711.5" y="571.5" width="5" height="5"/><rect x="796.5" y="571.5" width="5" height="5"/><rect x="820.5" y="533.5" width="5" height="5"/><rect x="905.5" y="533.5" width="5" height="5"/><rect x="820.5" y="571.5" width="5" height="5"/><rect x="906.5" y="571.5" width="5" height="5"/><rect x="698.5" y="584.5" width="5" height="5"/><rect x="925.5" y="584.5" width="5" height="5"/><rect x="695.5" y="654.5" width="5" height="5"/><rect x="925.5" y="654.5" width="5" height="5"/><rect x="711.5" y="584.5" width="5" height="5"/><rect x="711.5" y="654.5" width="5" height="5"/><rect x="741.5" y="584.5" width="5" height="5"/><rect x="741.5" y="654.5" width="5" height="5"/><rect x="771.5" y="584.5" width="5" height="5"/><rect x="771.5" y="654.5" width="5" height="5"/><rect x="801.5" y="584.5" width="5" height="5"/><rect x="801.5" y="654.5" width="5" height="5"/><rect x="830.5" y="584.5" width="5" height="5"/><rect x="830.5" y="654.5" width="5" height="5"/><rect x="860.5" y="584.5" width="5" height="5"/><rect x="860.5" y="654.5" width="5" height="5"/><rect x="890.5" y="584.5" width="5" height="5"/><rect x="890.5" y="654.5" width="5" height="5"/><rect x="923.5" y="584.5" width="5" height="5"/><rect x="923.5" y="654.5" width="5" height="5"/><rect x="717.5" y="425.5" width="5" height="5"/><rect x="807.5" y="653.5" width="5" height="5"/><rect x="741.5" y="425.5" width="5" height="5"/><rect x="829.5" y="653.5" width="5" height="5"/><rect x="725.5" y="443.5" width="5" height="5"/><rect x="748.5" y="443.5" width="5" height="5"/><rect x="736.5" y="473.5" width="5" height="5"/><rect x="759.5" y="473.5" width="5" height="5"/><rect x="748.5" y="503.5" width="5" height="5"/><rect x="771.5" y="503.5" width="5" height="5"/><rect x="760.5" y="533.5" width="5" height="5"/><rect x="783.5" y="533.5" width="5" height="5"/><rect x="772.5" y="563.5" width="5" height="5"/><rect x="794.5" y="563.5" width="5" height="5"/><rect x="784.5" y="593.5" width="5" height="5"/><rect x="806.5" y="593.5" width="5" height="5"/><rect x="795.5" y="623.5" width="5" height="5"/><rect x="818.5" y="623.5" width="5" height="5"/><rect x="711.5" y="761.5" width="5" height="5"/><rect x="795.5" y="761.5" width="5" height="5"/><rect x="711.5" y="799.5" width="5" height="5"/><rect x="796.5" y="799.5" width="5" height="5"/><rect x="820.5" y="761.5" width="5" height="5"/><rect x="905.5" y="761.5" width="5" height="5"/><rect x="820.5" y="799.5" width="5" height="5"/><rect x="906.5" y="799.5" width="5" height="5"/><rect x="698.5" y="813.5" width="5" height="5"/><rect x="925.5" y="813.5" width="5" height="5"/><rect x="695.5" y="883.5" width="5" height="5"/><rect x="925.5" y="883.5" width="5" height="5"/><rect x="711.5" y="813.5" width="5" height="5"/><rect x="711.5" y="883.5" width="5" height="5"/><rect x="741.5" y="813.5" width="5" height="5"/><rect x="741.5" y="883.5" width="5" height="5"/><rect x="771.5" y="813.5" width="5" height="5"/><rect x="771.5" y="883.5" width="5" height="5"/><rect x="801.5" y="813.5" width="5" height="5"/><rect x="801.5" y="883.5" width="5" height="5"/><rect x="830.5" y="813.5" width="5" height="5"/><rect x="830.5" y="883.5" width="5" height="5"/><rect x="860.5" y="813.5" width="5" height="5"/><rect x="860.5" y="883.5" width="5" height="5"/><rect x="890.5" y="813.5" width="5" height="5"/><rect x="890.5" y="883.5" width="5" height="5"/><rect x="923.5" y="813.5" width="5" height="5"/><rect x="923.5" y="883.5" width="5" height="5"/><rect x="717.5" y="654.5" width="5" height="5"/><rect x="807.5" y="881.5" width="5" height="5"/><rect x="829.5" y="881.5" width="5" height="5"/><rect x="725.5" y="672.5" width="5" height="5"/><rect x="748.5" y="672.5" width="5" height="5"/><rect x="736.5" y="702.5" width="5" height="5"/><rect x="759.5" y="702.5" width="5" height="5"/><rect x="748.5" y="732.5" width="5" height="5"/><rect x="771.5" y="732.5" width="5" height="5"/><rect x="760.5" y="762.5" width="5" height="5"/><rect x="783.5" y="762.5" width="5" height="5"/><rect x="772.5" y="792.5" width="5" height="5"/><rect x="794.5" y="792.5" width="5" height="5"/><rect x="784.5" y="822.5" width="5" height="5"/><rect x="806.5" y="822.5" width="5" height="5"/><rect x="795.5" y="852.5" width="5" height="5"/><rect x="818.5" y="852.5" width="5" height="5"/></g><rect x="691.5" y="199.5" width="241" height="722.5" fill="none" stroke="#4fff4f" stroke-width="1" shape-rendering="crispEdges"/><rect x="689" y="197" width="5" height="5" fill="#fff" stroke="#4fff4f" stroke-width="1"/><rect x="689" y="558" width="5" height="5" fill="#fff" stroke="#4fff4f" stroke-width="1"/><rect x="689" y="919.5" width="5" height="5" fill="#fff" stroke="#4fff4f" stroke-width="1"/><rect x="809" y="197" width="5" height="5" fill="#fff" stroke="#4fff4f" stroke-width="1"/><rect x="809" y="919.5" width="5" height="5" fill="#fff" stroke="#4fff4f" stroke-width="1"/><rect x="930" y="197" width="5" height="5" fill="#fff" stroke="#4fff4f" stroke-width="1"/><rect x="930" y="558" width="5" height="5" fill="#fff" stroke="#4fff4f" stroke-width="1"/><rect x="930" y="919.5" width="5" height="5" fill="#fff" stroke="#4fff4f" stroke-width="1"/>
</svg>
<svg class="a" style="left:19px;top:1px;" width="19" height="20" viewBox="0 0 19 20"><path fill="#111" d="M12.6 4.6c.8-1 1.3-2.300 1.100-3.600-1.100.100-2.500.800-3.300 1.800-.700.900-1.300 2.200-1.100 3.500 1.300.000 2.500-.700 3.300-1.700zM16.400 14.200c-.500 1.200-.800 1.700-1.400 2.700-.900 1.400-2.200 3.100-3.700 3.100-1.400.000-1.800-.900-3.600-.900-1.900.000-2.300.900-3.700.900-1.600.000-2.700-1.500-3.600-2.900-2.500-3.800-2.700-8.300-1.200-10.600 1.100-1.700 2.800-2.700 4.400-2.700 1.600.000 2.700.900 4.000.900 1.300.000 2.100-.900 4.000-.900 1.400.000 2.900.800 4.000 2.100-3.500 1.900-2.900 6.900.800 8.300z" transform="translate(2.1,0) scale(0.743,0.863)"/></svg>
<div class="t" style="left:54.0px;top:1.7px;font-size:14.75px;line-height:19px;color:#111;font-weight:bold;">Illustrator</div>
<div class="t" style="left:140.0px;top:1.7px;font-size:14.27px;line-height:19px;color:#111;">File</div>
<div class="t" style="left:181.0px;top:1.7px;font-size:14.51px;line-height:19px;color:#111;">Edit</div>
<div class="t" style="left:225.0px;top:1.7px;font-size:14.88px;line-height:19px;color:#111;">Object</div>
<div class="t" style="left:287.0px;top:2.2px;font-size:13.84px;line-height:18px;color:#111;">Type</div>
<div class="t" style="left:336.0px;top:1.7px;font-size:14.39px;line-height:19px;color:#111;">Select</div>
<div class="t" style="left:395.0px;top:1.7px;font-size:14.58px;line-height:19px;color:#111;">Effect</div>
<div class="t" style="left:451.0px;top:2.2px;font-size:13.96px;line-height:18px;color:#111;">View</div>
<div class="t" style="left:500.0px;top:1.7px;font-size:14.62px;line-height:19px;color:#111;">Window</div>
<div class="t" style="left:571.0px;top:1.7px;font-size:14.59px;line-height:19px;color:#111;">Help</div>
<div class="t" style="left:1426.0px;top:2.2px;font-size:14.11px;line-height:18px;color:#111;">Tue 18:08</div>
<div class="t" style="left:1506.5px;top:2.2px;font-size:14.03px;line-height:18px;color:#111;font-weight:bold;">Ben O'Brien</div>
<svg class="a" style="left:0px;top:0px;" width="1680" height="22" viewBox="0 0 1680 22"><rect x="1162" y="5.600" width="14.500" height="10.600" rx="1.600" fill="none" stroke="#111" stroke-width="1.900"/><path d="M1163 7.200l6.200 5 6.300-5" fill="none" stroke="#111" stroke-width="1.700"/><circle cx="1198" cy="10.500" r="7.300" fill="none" stroke="#111" stroke-width="1.700"/><line x1="1205.2" y1="11.8" x2="1196.6" y2="13.6" stroke="#111" stroke-width="1.300"/><line x1="1200.5" y1="17.4" x2="1194.6" y2="10.8" stroke="#111" stroke-width="1.300"/><line x1="1193.3" y1="16.1" x2="1196.0" y2="7.7" stroke="#111" stroke-width="1.300"/><line x1="1190.8" y1="9.2" x2="1199.4" y2="7.4" stroke="#111" stroke-width="1.300"/><line x1="1195.5" y1="3.6" x2="1201.4" y2="10.2" stroke="#111" stroke-width="1.300"/><line x1="1202.7" y1="4.9" x2="1200.0" y2="13.3" stroke="#111" stroke-width="1.300"/><path d="M1221.500 4.500h2v1.500h1.500v-1.500h2.500v1.500h1.500v-1.500h2v4.500l-1 1v7.500h-7.500v-7.500l-1-1z" fill="none" stroke="#111" stroke-width="1.500"/><rect x="1224.200" y="10" width="1.300" height="2.500" fill="#111"/><rect x="1227.300" y="9.500" width="1.300" height="2.500" fill="#111"/><path d="M1249 16.500c-2.800 0-4.600-1.800-4.600-4.200 0-2.200 1.500-3.800 3.400-4.100 0.800-2 2.700-3.300 4.900-3.300 2.400 0 4.300 1.400 5.100 3.400 2.200 0.200 3.800 1.800 3.800 4 0 2.400-1.800 4.200-4.400 4.200z" fill="none" stroke="#111" stroke-width="1.800"/><path d="M1252 15.500c-2.200 0-3.600-1.400-3.600-3.300 0-1.900 1.500-3.300 3.300-3.300 1.100 0 2 .500 2.600 1.200M1254.800 8.200c1-.700 2.600-.500 3.600.700" fill="none" stroke="#111" stroke-width="1.600"/><circle cx="1260.300" cy="13.200" r="4.600" fill="#c30000"/><path d="M1278.500 10.500a7 7 0 1 1 2.200 5.100" fill="none" stroke="#aeaeae" stroke-width="1.400"/><path d="M1275.600 9.200l3 3.600 2.600-3.900z" fill="#aeaeae"/><path d="M1285.300 5.800v5l2.800 2" fill="none" stroke="#aeaeae" stroke-width="1.300"/><path d="M1310 7.200l8 7-4.200 3.600v-14l4.200 3.500-8 7" fill="none" stroke="#aeaeae" stroke-width="1.200"/><path d="M1334.500 8.200c6-5.200 14-5.200 20 0l-10 10.200z" fill="none" stroke="#111" stroke-width="1.300" stroke-linejoin="round"/><path d="M1365 8h3.200l4.600-3.800v13.600l-4.600-3.800h-3.200z" fill="#111"/><path d="M1375 7.300c1.500 2 1.500 5.400 0 7.400" fill="none" stroke="#111" stroke-width="1.300"/><rect x="1397.700" y="4.600" width="15" height="12.600" rx="1.500" fill="none" stroke="#111" stroke-width="1.500"/><rect x="1397.700" y="4.600" width="15" height="3" fill="#111"/><path d="M1400 10h1M1402 10h1M1400 12.200h1M1402 12.200h1M1400 14.400h1M1402 14.400h1" stroke="#111" stroke-width="1"/><path d="M1406.500 10.200h3.600v4h-3.600zM1405.500 12.200h5.600M1408.300 9.400v5.600" fill="none" stroke="#111" stroke-width="1"/><circle cx="1615" cy="9.900" r="4.800" fill="none" stroke="#111" stroke-width="1.500"/><path d="M1618.600 13.600l4.800 4.800" stroke="#111" stroke-width="1.900"/><rect x="1639" y="6" width="2" height="2" fill="#111"/><rect x="1643.200" y="6" width="13.8" height="2" rx="1" fill="#111"/><rect x="1639" y="10" width="2" height="2" fill="#111"/><rect x="1643.200" y="10" width="10.8" height="2" rx="1" fill="#111"/><rect x="1639" y="14" width="2" height="2" fill="#111"/><rect x="1643.200" y="14" width="13.8" height="2" rx="1" fill="#111"/></svg>
<svg class="a" style="left:5px;top:24px;" width="80" height="33" viewBox="0 0 80 33"><circle cx="14" cy="16" r="6" fill="#f4505a"/><circle cx="14" cy="16" r="2" fill="#4a0a0e"/><circle cx="34" cy="16" r="6" fill="#f6b830"/><circle cx="54" cy="16" r="6" fill="#2bc840"/></svg>
<div class="t" style="left:82.500px;top:25.500px;font-size:22.500px;line-height:26px;font-weight:bold;color:#c58a5e;transform-origin:0 0;transform:scaleX(0.760)">Ai</div>
<div class="a" style="left:124px;top:31px;width:17px;height:17px;border:1px solid #c8c8c8;background:#2a2a2a;border-radius:1px"></div>
<div class="t" style="left:127.5px;top:33.8px;font-size:9.00px;line-height:12px;color:#e8e8e8;font-weight:bold;">Br</div>
<svg class="a" style="left:162px;top:31px;" width="30" height="17" viewBox="0 0 30 17"><rect x="1.500" y="1.500" width="16.500" height="13.500" fill="#3a3a3a" stroke="#d0d0d0" stroke-width="1.300"/><rect x="3.500" y="3.500" width="5.500" height="9.500" fill="#c8c8c8"/><rect x="10.500" y="3.500" width="5.500" height="4" fill="#c8c8c8"/><rect x="10.500" y="9" width="5.500" height="4" fill="#c8c8c8"/><path d="M21.500 7.500h6.500l-3.250 4z" fill="#d0d0d0"/></svg>
<div class="a" style="left:1440px;top:30px;width:1px;height:20px;background:#333;border-right:1px solid #5a5a5a;width:2px"></div>
<div class="a" style="left:1546px;top:30px;width:2px;height:20px;background:#333;border-right:1px solid #5a5a5a"></div>
<div class="t" style="left:1454.5px;top:30.8px;font-size:13.00px;line-height:17px;color:#dcdcdc;font-weight:bold;transform-origin:0 50%;transform:scaleX(0.949);">Essentials</div>
<svg class="a" style="left:1524px;top:37px;" width="10" height="6" viewBox="0 0 10 6"><path d="M1.500 1h6l-3 3.600z" fill="#d0d0d0"/></svg>
<div class="a" style="left:1555px;top:31px;width:125px;height:18px;background:#a6a6a6;border:1px solid #2e2e2e;border-right:none;border-radius:2px 0 0 2px;box-shadow:inset 0 1px 1px #7a7a7a"></div>
<svg class="a" style="left:1558px;top:33px;" width="16" height="14" viewBox="0 0 16 14"><circle cx="8.300" cy="5.300" r="3.600" fill="none" stroke="#2a2a2a" stroke-width="1.200"/><path d="M5.800 8l-3.800 4" stroke="#2a2a2a" stroke-width="1.500"/></svg>
<div class="a" style="left:9px;top:65px;width:3px;height:20px;background:repeating-linear-gradient(#111 0 1px,transparent 1px 2px)"></div>
<div class="t" style="left:19.0px;top:67.0px;font-size:12.00px;line-height:16px;color:#d8d8d8;transform-origin:0 50%;transform:scaleX(0.900);-webkit-text-stroke:0.25px #d8d8d8;">Group</div>
<div class="a" style="left:107px;top:62px;width:1px;height:26px;background:#303030"></div><div class="a" style="left:108px;top:62px;width:1px;height:26px;background:#555"></div>
<div class="a" style="left:115px;top:65.5px;width:19px;height:18.5px;background:#fff;border:1px solid #222;"></div>
<div class="a" style="left:118px;top:68.5px;width:13px;height:12.500px;background:#3c3c3c"></div>
<div class="t" style="left:121.3px;top:67.0px;font-size:12.05px;line-height:16px;color:#e8e8e8;">?</div>
<div class="a" style="left:134px;top:65.5px;width:15px;height:18.0px;background:linear-gradient(#5a5a5a,#484848);border:1px solid #2a2a2a;border-left:none;"></div><svg class="a" style="left:136px;top:71.5px;" width="11" height="7" viewBox="0 0 11 7"><path d="M2.200 1.300h6.400l-3.200 3.900z" fill="#d6d6d6"/></svg>
<div class="a" style="left:156px;top:65.5px;width:19px;height:18.5px;background:#fff;border:1px solid #222;"></div>
<svg class="a" style="left:157px;top:66.5px;" width="17" height="17" viewBox="0 0 17 17"><rect x="5.500" y="5.500" width="6" height="6" fill="#fff" stroke="#111" stroke-width="1.200"/><path d="M1 16L16 1" stroke="#e8112d" stroke-width="2"/></svg>
<div class="a" style="left:175px;top:65.5px;width:15px;height:18.0px;background:linear-gradient(#5a5a5a,#484848);border:1px solid #2a2a2a;border-left:none;"></div><svg class="a" style="left:177px;top:71.5px;" width="11" height="7" viewBox="0 0 11 7"><path d="M2.200 1.300h6.400l-3.200 3.900z" fill="#d6d6d6"/></svg>
<div class="t" style="left:203.0px;top:67.3px;font-size:12.00px;line-height:16px;color:#e8932e;transform-origin:0 50%;transform:scaleX(0.868);-webkit-text-stroke:0.3px #e8932e;">Stroke:</div><div class="a" style="left:203px;top:81.3px;width:33px;height:0;border-bottom:1px dotted #e8932e"></div>
<div class="a" style="left:244px;top:65.5px;width:17px;height:18.0px;background:linear-gradient(#5a5a5a,#474747);border:1px solid #2a2a2a;"></div><div class="a" style="left:245px;top:74.5px;width:15px;height:1px;background:#333"></div><svg class="a" style="left:247.5px;top:67.5px;" width="10" height="14" viewBox="0 0 10 14"><path d="M2 4.800l3-3.200 3 3.200z" fill="#d6d6d6"/><path d="M2 9.2 h6l-3 3.200z" fill="#d6d6d6"/></svg>
<div class="a" style="left:260px;top:65.5px;width:54px;height:18.0px;background:#a4a4a4;border:1px solid #2a2a2a;box-shadow:inset 0 1px 1px rgba(0,0,0,.35);"></div>
<div class="a" style="left:314px;top:65.5px;width:15px;height:18.0px;background:linear-gradient(#5a5a5a,#484848);border:1px solid #2a2a2a;border-left:none;"></div><svg class="a" style="left:316px;top:71.5px;" width="11" height="7" viewBox="0 0 11 7"><path d="M2.200 1.300h6.400l-3.200 3.900z" fill="#d6d6d6"/></svg>
<div class="a" style="left:337px;top:65.5px;width:91px;height:18.0px;background:#6c6c6c;border:1px solid #2a2a2a;box-shadow:inset 0 1px 1px rgba(0,0,0,.35);"></div>
<div class="a" style="left:428px;top:65.5px;width:15px;height:18.0px;background:linear-gradient(#5a5a5a,#484848);border:1px solid #2a2a2a;border-left:none;"></div><svg class="a" style="left:430px;top:71.5px;" width="11" height="7" viewBox="0 0 11 7"><path d="M2.200 1.300h6.400l-3.200 3.900z" fill="#5e5e5e"/></svg>
<div class="a" style="left:451px;top:65.5px;width:88px;height:18.0px;background:#dedede;border:1px solid #222;"></div>
<div class="a" style="left:457px;top:73px;width:46px;height:3px;background:#000"></div>
<div class="t" style="left:507.5px;top:67.3px;font-size:12.00px;line-height:16px;color:#1a1a1a;transform-origin:0 50%;transform:scaleX(0.869);">Basic</div>
<div class="a" style="left:539px;top:65.5px;width:15px;height:18.0px;background:linear-gradient(#5a5a5a,#484848);border:1px solid #2a2a2a;border-left:none;"></div><svg class="a" style="left:541px;top:71.5px;" width="11" height="7" viewBox="0 0 11 7"><path d="M2.200 1.300h6.400l-3.200 3.900z" fill="#d6d6d6"/></svg>
<div class="t" style="left:562.0px;top:67.3px;font-size:12.00px;line-height:16px;color:#e8932e;transform-origin:0 50%;transform:scaleX(0.886);-webkit-text-stroke:0.3px #e8932e;">Opacity:</div><div class="a" style="left:562px;top:81.3px;width:39px;height:0;border-bottom:1px dotted #e8932e"></div>
<div class="a" style="left:608px;top:65.5px;width:61px;height:18.0px;background:#a4a4a4;border:1px solid #2a2a2a;box-shadow:inset 0 1px 1px rgba(0,0,0,.35);"></div>
<div class="t" style="left:611.5px;top:67.3px;font-size:11.50px;line-height:15px;color:#111;transform-origin:0 50%;transform:scaleX(0.867);">100%</div>
<div class="a" style="left:669px;top:65.5px;width:15px;height:18.0px;background:linear-gradient(#5a5a5a,#484848);border:1px solid #2a2a2a;border-left:none;"></div><svg class="a" style="left:671px;top:71.5px;" width="11" height="7" viewBox="0 0 11 7"><path d="M2.200 1.300h6.400l-3.200 3.900z" fill="#d6d6d6"/></svg>
<div class="t" style="left:689.5px;top:67.0px;font-size:12.00px;line-height:16px;color:#d8d8d8;transform-origin:0 50%;transform:scaleX(0.883);-webkit-text-stroke:0.25px #d8d8d8;">Style:</div>
<div class="a" style="left:722px;top:65.5px;width:18px;height:18.0px;background:#dcdcdc;border:1px solid #222;"></div>
<div class="a" style="left:740px;top:65.5px;width:15px;height:18.0px;background:linear-gradient(#5a5a5a,#484848);border:1px solid #2a2a2a;border-left:none;"></div><svg class="a" style="left:742px;top:71.5px;" width="11" height="7" viewBox="0 0 11 7"><path d="M2.200 1.300h6.400l-3.200 3.900z" fill="#d6d6d6"/></svg>
<div class="a" style="left:763px;top:62px;width:1px;height:26px;background:#303030"></div><div class="a" style="left:764px;top:62px;width:1px;height:26px;background:#555"></div>
<svg class="a" style="left:774px;top:66px;" width="17" height="17" viewBox="0 0 17 17"><defs><radialGradient id="rg1"><stop offset="0" stop-color="#e8e8e8"/><stop offset="1" stop-color="#8a8a8a"/></radialGradient></defs><circle cx="8.500" cy="8.500" r="7.300" fill="url(#rg1)" stroke="#2a2a2a" stroke-width="1"/><path d="M8.500 8.500L8.500 1.200M8.500 8.500L14.800 5M8.500 8.500L14.800 12M8.500 8.500V15.800M8.500 8.500L2.200 12M8.500 8.500L2.200 5" stroke="#555" stroke-width=".800"/><circle cx="8.500" cy="8.500" r="2.200" fill="#bbb" stroke="#666" stroke-width=".600"/></svg>
<div class="a" style="left:800px;top:62px;width:1px;height:26px;background:#303030"></div><div class="a" style="left:801px;top:62px;width:1px;height:26px;background:#555"></div>
<svg class="a" style="left:812px;top:66px;" width="30" height="17" viewBox="0 0 30 17"><rect x="1.500" y="1.500" width="14" height="13" fill="none" stroke="#d0d0d0" stroke-width="1.200" stroke-dasharray="2.200 1.500"/><circle cx="8.500" cy="8" r="3" fill="none" stroke="#d0d0d0" stroke-width="1.100"/><path d="M8.500 3.500v2M8.500 10.500v2M4 8h2M11 8h2" stroke="#d0d0d0" stroke-width="1"/><path d="M19.500 6.500h7l-3.500 4z" fill="#d0d0d0"/></svg>
<div class="a" style="left:849px;top:62px;width:1px;height:26px;background:#303030"></div><div class="a" style="left:850px;top:62px;width:1px;height:26px;background:#555"></div>
<svg class="a" style="left:854px;top:62px;" width="24" height="24" viewBox="0 0 24 24"><rect x="2.5" y="2.5" width="4" height="4" fill="none" stroke="#d8d8d8" stroke-width="1"/><rect x="2.5" y="10.0" width="4" height="4" fill="none" stroke="#d8d8d8" stroke-width="1"/><rect x="2.5" y="17.5" width="4" height="4" fill="none" stroke="#d8d8d8" stroke-width="1"/><rect x="10.0" y="2.5" width="4" height="4" fill="none" stroke="#d8d8d8" stroke-width="1"/><rect x="9.5" y="9.5" width="5" height="5" fill="#d8d8d8"/><rect x="10.0" y="17.5" width="4" height="4" fill="none" stroke="#d8d8d8" stroke-width="1"/><rect x="17.5" y="2.5" width="4" height="4" fill="none" stroke="#d8d8d8" stroke-width="1"/><rect x="17.5" y="10.0" width="4" height="4" fill="none" stroke="#d8d8d8" stroke-width="1"/><rect x="17.5" y="17.5" width="4" height="4" fill="none" stroke="#d8d8d8" stroke-width="1"/><path d="M6.500 4.500h3.500M14 4.500h3.500M6.500 19.500h3.500M14 19.500h3.500M4.500 6.500v3.500M4.500 14v3.500M19.500 6.500v3.500M19.500 14v3.500" stroke="#d8d8d8" stroke-width="1"/></svg>
<div class="t" style="left:884.7px;top:68.5px;font-size:10.50px;line-height:14px;color:#e8932e;font-weight:bold;letter-spacing:-0.3px;">X:</div><div class="a" style="left:885px;top:81.3px;width:9px;height:0;border-bottom:1px dotted #e8932e"></div>
<div class="a" style="left:900.5px;top:65.5px;width:17.0px;height:18.0px;background:linear-gradient(#5a5a5a,#474747);border:1px solid #2a2a2a;"></div><div class="a" style="left:901.5px;top:74.5px;width:15px;height:1px;background:#333"></div><svg class="a" style="left:904.0px;top:67.5px;" width="10" height="14" viewBox="0 0 10 14"><path d="M2 4.800l3-3.200 3 3.200z" fill="#d6d6d6"/><path d="M2 9.2 h6l-3 3.200z" fill="#d6d6d6"/></svg>
<div class="a" style="left:917.5px;top:65.5px;width:66.0px;height:18.0px;background:#a4a4a4;border:1px solid #2a2a2a;box-shadow:inset 0 1px 1px rgba(0,0,0,.35);"></div>
<div class="t" style="left:922.5px;top:67.0px;font-size:11.22px;line-height:15px;color:#111;-webkit-text-stroke:0.2px #111;">781.797 px</div>
<div class="t" style="left:991.7px;top:68.5px;font-size:10.50px;line-height:14px;color:#e8932e;font-weight:bold;letter-spacing:-0.3px;">Y:</div><div class="a" style="left:992px;top:81.3px;width:9px;height:0;border-bottom:1px dotted #e8932e"></div>
<div class="a" style="left:1007.5px;top:65.5px;width:17.0px;height:18.0px;background:linear-gradient(#5a5a5a,#474747);border:1px solid #2a2a2a;"></div><div class="a" style="left:1008.5px;top:74.5px;width:15px;height:1px;background:#333"></div><svg class="a" style="left:1011.0px;top:67.5px;" width="10" height="14" viewBox="0 0 10 14"><path d="M2 4.800l3-3.200 3 3.200z" fill="#d6d6d6"/><path d="M2 9.2 h6l-3 3.200z" fill="#d6d6d6"/></svg>
<div class="a" style="left:1024.5px;top:65.5px;width:66.0px;height:18.0px;background:#a4a4a4;border:1px solid #2a2a2a;box-shadow:inset 0 1px 1px rgba(0,0,0,.35);"></div>
<div class="t" style="left:1029.5px;top:67.0px;font-size:11.22px;line-height:15px;color:#111;-webkit-text-stroke:0.2px #111;">438.749 px</div>
<div class="t" style="left:1098.2px;top:68.5px;font-size:10.50px;line-height:14px;color:#e8932e;font-weight:bold;letter-spacing:-0.3px;">W:</div><div class="a" style="left:1098.5px;top:81.3px;width:11.5px;height:0;border-bottom:1px dotted #e8932e"></div>
<div class="a" style="left:1116.5px;top:64.2px;width:17.0px;height:18.299999999999997px;background:linear-gradient(#5a5a5a,#474747);border:1px solid #2a2a2a;"></div><div class="a" style="left:1117.5px;top:73.35000000000001px;width:15px;height:1px;background:#333"></div><svg class="a" style="left:1120.0px;top:66.2px;" width="10" height="14.3" viewBox="0 0 10 14.3"><path d="M2 4.800l3-3.200 3 3.200z" fill="#d6d6d6"/><path d="M2 9.5 h6l-3 3.200z" fill="#d6d6d6"/></svg>
<div class="a" style="left:1133.5px;top:64.2px;width:66.0px;height:18.299999999999997px;background:#a4a4a4;border:1px solid #2a2a2a;box-shadow:inset 0 1px 1px rgba(0,0,0,.35);"></div>
<div class="t" style="left:1138.5px;top:66.0px;font-size:11.32px;line-height:15px;color:#111;-webkit-text-stroke:0.2px #111;">120.569 px</div>
<svg class="a" style="left:1210px;top:66px;" width="16" height="17" viewBox="0 0 16 17"><path d="M6.500 5.500h-2a3 3 0 0 0 0 6h2M9.500 5.500h2a3 3 0 0 1 0 6h-2" fill="none" stroke="#d0d0d0" stroke-width="1.500"/><path d="M8 1v3M8 13v3M4 2l1.300 2M12 2l-1.300 2M4 15l1.300-2M12 15l-1.300-2" stroke="#d0d0d0" stroke-width="1"/></svg>
<div class="t" style="left:1237.2px;top:68.5px;font-size:10.50px;line-height:14px;color:#e8932e;font-weight:bold;letter-spacing:-0.3px;">H:</div><div class="a" style="left:1237.5px;top:81.3px;width:10.0px;height:0;border-bottom:1px dotted #e8932e"></div>
<div class="a" style="left:1253.5px;top:64.2px;width:17.0px;height:18.299999999999997px;background:linear-gradient(#5a5a5a,#474747);border:1px solid #2a2a2a;"></div><div class="a" style="left:1254.5px;top:73.35000000000001px;width:15px;height:1px;background:#333"></div><svg class="a" style="left:1257.0px;top:66.2px;" width="10" height="14.3" viewBox="0 0 10 14.3"><path d="M2 4.800l3-3.200 3 3.200z" fill="#d6d6d6"/><path d="M2 9.5 h6l-3 3.200z" fill="#d6d6d6"/></svg>
<div class="a" style="left:1270.5px;top:64.2px;width:66.0px;height:18.299999999999997px;background:#a4a4a4;border:1px solid #2a2a2a;box-shadow:inset 0 1px 1px rgba(0,0,0,.35);"></div>
<div class="t" style="left:1275.5px;top:66.0px;font-size:11.22px;line-height:15px;color:#111;-webkit-text-stroke:0.2px #111;">361.528 px</div>
<div class="a" style="left:1343px;top:62px;width:1px;height:26px;background:#303030"></div><div class="a" style="left:1344px;top:62px;width:1px;height:26px;background:#555"></div>
<svg class="a" style="left:1354px;top:66px;" width="18" height="16" viewBox="0 0 18 16"><rect x="5" y="4.500" width="8" height="7" fill="#6a6a6a" stroke="#e0e0e0" stroke-width="1.200"/><path d="M1 1l3 2.500M17 1l-3 2.500M1 15l3-2.500M17 15l-3-2.500" stroke="#e0e0e0" stroke-width="1.200"/><path d="M2 8h2M14 8h2" stroke="#e0e0e0" stroke-width="1"/></svg>
<svg class="a" style="left:1385px;top:65px;" width="34" height="18" viewBox="0 0 34 18"><rect x="1.500" y="5.500" width="7" height="7" fill="#777" stroke="#d8d8d8" stroke-width="1"/><rect x="9.500" y="2.500" width="7" height="7" fill="#777" stroke="#d8d8d8" stroke-width="1" stroke-dasharray="1.500 1"/><path d="M7.500 5.500l8.500 5-3.800.600-1.700 3.600z" fill="#d8d8d8" stroke="#444" stroke-width=".500"/><path d="M24 6.500h7l-3.500 4.500z" fill="#d8d8d8"/></svg>
<svg class="a" style="left:1657px;top:70px;" width="16" height="9" viewBox="0 0 16 9"><path d="M0.500 2h4.500l-2.250 2.800z" fill="#d8d8d8"/><path d="M6.500 1.500h8.500M6.500 4.500h8.500M6.500 7.500h8.500" stroke="#d8d8d8" stroke-width="1.200"/></svg>
<svg class="a" style="left:52px;top:97px;" width="9" height="9" viewBox="0 0 9 9"><path d="M1.500 1.500l5.500 5.500M7 1.500l-5.500 5.500" stroke="#e0e0e0" stroke-width="1.300"/></svg>
<div class="t" style="left:68.0px;top:95.0px;font-size:10.62px;line-height:14px;color:#e4e4e4;font-weight:bold;">STEP 03.pdf* @ 200% (RGB/Preview)</div>
<div class="a" style="left:46px;top:112px;width:16px;height:16px;background:#2b2b2b;border-right:1px solid #6a6a6a;border-bottom:1px solid #6a6a6a"></div>
<svg class="a" style="left:46px;top:112px;" width="16" height="16" viewBox="0 0 16 16"><path d="M1 3.500h13M4.500 1v13" stroke="#929292" stroke-width="1" stroke-dasharray="1 1"/></svg>
<svg class="a" style="left:46px;top:112px;" width="1586" height="15" viewBox="0 0 1586 15"><rect x="17.25" y="9" width="1" height="6" fill="#8c8c8c"/><rect x="29.25" y="12" width="1" height="3" fill="#8c8c8c"/><rect x="41.25" y="9" width="1" height="6" fill="#8c8c8c"/><rect x="53.25" y="12" width="1" height="3" fill="#8c8c8c"/><rect x="65.25" y="0" width="1" height="15" fill="#8c8c8c"/><rect x="77.25" y="12" width="1" height="3" fill="#8c8c8c"/><rect x="89.25" y="9" width="1" height="6" fill="#8c8c8c"/><rect x="101.25" y="12" width="1" height="3" fill="#8c8c8c"/><rect x="113.25" y="9" width="1" height="6" fill="#8c8c8c"/><rect x="125.25" y="12" width="1" height="3" fill="#8c8c8c"/><rect x="137.25" y="0" width="1" height="15" fill="#8c8c8c"/><rect x="149.25" y="12" width="1" height="3" fill="#8c8c8c"/><rect x="161.25" y="9" width="1" height="6" fill="#8c8c8c"/><rect x="173.25" y="12" width="1" height="3" fill="#8c8c8c"/><rect x="185.25" y="9" width="1" height="6" fill="#8c8c8c"/><rect x="197.25" y="12" width="1" height="3" fill="#8c8c8c"/><rect x="209.25" y="0" width="1" height="15" fill="#8c8c8c"/><rect x="221.25" y="12" width="1" height="3" fill="#8c8c8c"/><rect x="233.25" y="9" width="1" height="6" fill="#8c8c8c"/><rect x="245.25" y="12" width="1" height="3" fill="#8c8c8c"/><rect x="257.25" y="9" width="1" height="6" fill="#8c8c8c"/><rect x="269.25" y="12" width="1" height="3" fill="#8c8c8c"/><rect x="281.25" y="0" width="1" height="15" fill="#8c8c8c"/><rect x="293.25" y="12" width="1" height="3" fill="#8c8c8c"/><rect x="305.25" y="9" width="1" height="6" fill="#8c8c8c"/><rect x="317.25" y="12" width="1" height="3" fill="#8c8c8c"/><rect x="329.25" y="9" width="1" height="6" fill="#8c8c8c"/><rect x="341.25" y="12" width="1" height="3" fill="#8c8c8c"/><rect x="353.25" y="0" width="1" height="15" fill="#8c8c8c"/><rect x="365.25" y="12" width="1" height="3" fill="#8c8c8c"/><rect x="377.25" y="9" width="1" height="6" fill="#8c8c8c"/><rect x="389.25" y="12" width="1" height="3" fill="#8c8c8c"/><rect x="401.25" y="9" width="1" height="6" fill="#8c8c8c"/><rect x="413.25" y="12" width="1" height="3" fill="#8c8c8c"/><rect x="425.25" y="0" width="1" height="15" fill="#8c8c8c"/><rect x="437.25" y="12" width="1" height="3" fill="#8c8c8c"/><rect x="449.25" y="9" width="1" height="6" fill="#8c8c8c"/><rect x="461.25" y="12" width="1" height="3" fill="#8c8c8c"/><rect x="473.25" y="9" width="1" height="6" fill="#8c8c8c"/><rect x="485.25" y="12" width="1" height="3" fill="#8c8c8c"/><rect x="497.25" y="0" width="1" height="15" fill="#8c8c8c"/><rect x="509.25" y="12" width="1" height="3" fill="#8c8c8c"/><rect x="521.25" y="9" width="1" height="6" fill="#8c8c8c"/><rect x="533.25" y="12" width="1" height="3" fill="#8c8c8c"/><rect x="545.25" y="9" width="1" height="6" fill="#8c8c8c"/><rect x="557.25" y="12" width="1" height="3" fill="#8c8c8c"/><rect x="569.25" y="0" width="1" height="15" fill="#8c8c8c"/><rect x="581.25" y="12" width="1" height="3" fill="#8c8c8c"/><rect x="593.25" y="9" width="1" height="6" fill="#8c8c8c"/><rect x="605.25" y="12" width="1" height="3" fill="#8c8c8c"/><rect x="617.25" y="9" width="1" height="6" fill="#8c8c8c"/><rect x="629.25" y="12" width="1" height="3" fill="#8c8c8c"/><rect x="641.25" y="0" width="1" height="15" fill="#8c8c8c"/><rect x="653.25" y="12" width="1" height="3" fill="#8c8c8c"/><rect x="665.25" y="9" width="1" height="6" fill="#8c8c8c"/><rect x="677.25" y="12" width="1" height="3" fill="#8c8c8c"/><rect x="689.25" y="9" width="1" height="6" fill="#8c8c8c"/><rect x="701.25" y="12" width="1" height="3" fill="#8c8c8c"/><rect x="713.25" y="0" width="1" height="15" fill="#8c8c8c"/><rect x="725.25" y="12" width="1" height="3" fill="#8c8c8c"/><rect x="737.25" y="9" width="1" height="6" fill="#8c8c8c"/><rect x="749.25" y="12" width="1" height="3" fill="#8c8c8c"/><rect x="761.25" y="9" width="1" height="6" fill="#8c8c8c"/><rect x="773.25" y="12" width="1" height="3" fill="#8c8c8c"/><rect x="785.25" y="0" width="1" height="15" fill="#8c8c8c"/><rect x="797.25" y="12" width="1" height="3" fill="#8c8c8c"/><rect x="809.25" y="9" width="1" height="6" fill="#8c8c8c"/><rect x="821.25" y="12" width="1" height="3" fill="#8c8c8c"/><rect x="833.25" y="9" width="1" height="6" fill="#8c8c8c"/><rect x="845.25" y="12" width="1" height="3" fill="#8c8c8c"/><rect x="857.25" y="0" width="1" height="15" fill="#8c8c8c"/><rect x="869.25" y="12" width="1" height="3" fill="#8c8c8c"/><rect x="881.25" y="9" width="1" height="6" fill="#8c8c8c"/><rect x="893.25" y="12" width="1" height="3" fill="#8c8c8c"/><rect x="905.25" y="9" width="1" height="6" fill="#8c8c8c"/><rect x="917.25" y="12" width="1" height="3" fill="#8c8c8c"/><rect x="929.25" y="0" width="1" height="15" fill="#8c8c8c"/><rect x="941.25" y="12" width="1" height="3" fill="#8c8c8c"/><rect x="953.25" y="9" width="1" height="6" fill="#8c8c8c"/><rect x="965.25" y="12" width="1" height="3" fill="#8c8c8c"/><rect x="977.25" y="9" width="1" height="6" fill="#8c8c8c"/><rect x="989.25" y="12" width="1" height="3" fill="#8c8c8c"/><rect x="1001.25" y="0" width="1" height="15" fill="#8c8c8c"/><rect x="1013.25" y="12" width="1" height="3" fill="#8c8c8c"/><rect x="1025.25" y="9" width="1" height="6" fill="#8c8c8c"/><rect x="1037.25" y="12" width="1" height="3" fill="#8c8c8c"/><rect x="1049.25" y="9" width="1" height="6" fill="#8c8c8c"/><rect x="1061.25" y="12" width="1" height="3" fill="#8c8c8c"/><rect x="1073.25" y="0" width="1" height="15" fill="#8c8c8c"/><rect x="1085.25" y="12" width="1" height="3" fill="#8c8c8c"/><rect x="1097.25" y="9" width="1" height="6" fill="#8c8c8c"/><rect x="1109.25" y="12" width="1" height="3" fill="#8c8c8c"/><rect x="1121.25" y="9" width="1" height="6" fill="#8c8c8c"/><rect x="1133.25" y="12" width="1" height="3" fill="#8c8c8c"/><rect x="1145.25" y="0" width="1" height="15" fill="#8c8c8c"/><rect x="1157.25" y="12" width="1" height="3" fill="#8c8c8c"/><rect x="1169.25" y="9" width="1" height="6" fill="#8c8c8c"/><rect x="1181.25" y="12" width="1" height="3" fill="#8c8c8c"/><rect x="1193.25" y="9" width="1" height="6" fill="#8c8c8c"/><rect x="1205.25" y="12" width="1" height="3" fill="#8c8c8c"/><rect x="1217.25" y="0" width="1" height="15" fill="#8c8c8c"/><rect x="1229.25" y="12" width="1" height="3" fill="#8c8c8c"/><rect x="1241.25" y="9" width="1" height="6" fill="#8c8c8c"/><rect x="1253.25" y="12" width="1" height="3" fill="#8c8c8c"/><rect x="1265.25" y="9" width="1" height="6" fill="#8c8c8c"/><rect x="1277.25" y="12" width="1" height="3" fill="#8c8c8c"/><rect x="1289.25" y="0" width="1" height="15" fill="#8c8c8c"/><rect x="1301.25" y="12" width="1" height="3" fill="#8c8c8c"/><rect x="1313.25" y="9" width="1" height="6" fill="#8c8c8c"/><rect x="1325.25" y="12" width="1" height="3" fill="#8c8c8c"/><rect x="1337.25" y="9" width="1" height="6" fill="#8c8c8c"/><rect x="1349.25" y="12" width="1" height="3" fill="#8c8c8c"/><rect x="1361.25" y="0" width="1" height="15" fill="#8c8c8c"/><rect x="1373.25" y="12" width="1" height="3" fill="#8c8c8c"/><rect x="1385.25" y="9" width="1" height="6" fill="#8c8c8c"/><rect x="1397.25" y="12" width="1" height="3" fill="#8c8c8c"/><rect x="1409.25" y="9" width="1" height="6" fill="#8c8c8c"/><rect x="1421.25" y="12" width="1" height="3" fill="#8c8c8c"/><rect x="1433.25" y="0" width="1" height="15" fill="#8c8c8c"/><rect x="1445.25" y="12" width="1" height="3" fill="#8c8c8c"/><rect x="1457.25" y="9" width="1" height="6" fill="#8c8c8c"/><rect x="1469.25" y="12" width="1" height="3" fill="#8c8c8c"/><rect x="1481.25" y="9" width="1" height="6" fill="#8c8c8c"/><rect x="1493.25" y="12" width="1" height="3" fill="#8c8c8c"/><rect x="1505.25" y="0" width="1" height="15" fill="#8c8c8c"/><rect x="1517.25" y="12" width="1" height="3" fill="#8c8c8c"/><rect x="1529.25" y="9" width="1" height="6" fill="#8c8c8c"/><rect x="1541.25" y="12" width="1" height="3" fill="#8c8c8c"/><rect x="1553.25" y="9" width="1" height="6" fill="#8c8c8c"/><rect x="1565.25" y="12" width="1" height="3" fill="#8c8c8c"/><rect x="1577.25" y="0" width="1" height="15" fill="#8c8c8c"/></svg>
<div class="t" style="left:113.8px;top:110.5px;font-size:11.30px;line-height:15px;color:#d2d2d2;transform-origin:0 50%;transform:scaleX(0.93);will-change:transform;">432</div>
<div class="t" style="left:185.8px;top:110.5px;font-size:11.30px;line-height:15px;color:#d2d2d2;transform-origin:0 50%;transform:scaleX(0.93);will-change:transform;">468</div>
<div class="t" style="left:257.8px;top:110.5px;font-size:11.30px;line-height:15px;color:#d2d2d2;transform-origin:0 50%;transform:scaleX(0.93);will-change:transform;">504</div>
<div class="t" style="left:329.8px;top:110.5px;font-size:11.30px;line-height:15px;color:#d2d2d2;transform-origin:0 50%;transform:scaleX(0.93);will-change:transform;">540</div>
<div class="t" style="left:401.8px;top:110.5px;font-size:11.30px;line-height:15px;color:#d2d2d2;transform-origin:0 50%;transform:scaleX(0.93);will-change:transform;">576</div>
<div class="t" style="left:473.8px;top:110.5px;font-size:11.30px;line-height:15px;color:#d2d2d2;transform-origin:0 50%;transform:scaleX(0.93);will-change:transform;">612</div>
<div class="t" style="left:545.8px;top:110.5px;font-size:11.30px;line-height:15px;color:#d2d2d2;transform-origin:0 50%;transform:scaleX(0.93);will-change:transform;">648</div>
<div class="t" style="left:617.8px;top:110.5px;font-size:11.30px;line-height:15px;color:#d2d2d2;transform-origin:0 50%;transform:scaleX(0.93);will-change:transform;">684</div>
<div class="t" style="left:689.8px;top:110.5px;font-size:11.30px;line-height:15px;color:#d2d2d2;transform-origin:0 50%;transform:scaleX(0.93);will-change:transform;">720</div>
<div class="t" style="left:761.8px;top:110.5px;font-size:11.30px;line-height:15px;color:#d2d2d2;transform-origin:0 50%;transform:scaleX(0.93);will-change:transform;">756</div>
<div class="t" style="left:833.8px;top:110.5px;font-size:11.30px;line-height:15px;color:#d2d2d2;transform-origin:0 50%;transform:scaleX(0.93);will-change:transform;">792</div>
<div class="t" style="left:905.8px;top:110.5px;font-size:11.30px;line-height:15px;color:#d2d2d2;transform-origin:0 50%;transform:scaleX(0.93);will-change:transform;">828</div>
<div class="t" style="left:977.8px;top:110.5px;font-size:11.30px;line-height:15px;color:#d2d2d2;transform-origin:0 50%;transform:scaleX(0.93);will-change:transform;">864</div>
<div class="t" style="left:1049.8px;top:110.5px;font-size:11.30px;line-height:15px;color:#d2d2d2;transform-origin:0 50%;transform:scaleX(0.93);will-change:transform;">900</div>
<div class="t" style="left:1121.8px;top:110.5px;font-size:11.30px;line-height:15px;color:#d2d2d2;transform-origin:0 50%;transform:scaleX(0.93);will-change:transform;">936</div>
<div class="t" style="left:1193.8px;top:110.5px;font-size:11.30px;line-height:15px;color:#d2d2d2;transform-origin:0 50%;transform:scaleX(0.93);will-change:transform;">972</div>
<div class="t" style="left:1265.8px;top:110.5px;font-size:11.30px;line-height:15px;color:#d2d2d2;transform-origin:0 50%;transform:scaleX(0.93);will-change:transform;">1008</div>
<div class="t" style="left:1337.8px;top:110.5px;font-size:11.30px;line-height:15px;color:#d2d2d2;transform-origin:0 50%;transform:scaleX(0.93);will-change:transform;">1044</div>
<div class="t" style="left:1409.8px;top:110.5px;font-size:11.30px;line-height:15px;color:#d2d2d2;transform-origin:0 50%;transform:scaleX(0.93);will-change:transform;">1080</div>
<div class="t" style="left:1481.8px;top:110.5px;font-size:11.30px;line-height:15px;color:#d2d2d2;transform-origin:0 50%;transform:scaleX(0.93);will-change:transform;">1116</div>
<div class="t" style="left:1553.8px;top:110.5px;font-size:11.30px;line-height:15px;color:#d2d2d2;transform-origin:0 50%;transform:scaleX(0.93);will-change:transform;">1152</div>
<div class="t" style="left:1625.8px;top:110.5px;font-size:11.30px;line-height:15px;color:#d2d2d2;transform-origin:0 50%;transform:scaleX(0.93);will-change:transform;">1</div>
<svg class="a" style="left:46px;top:128px;" width="15" height="910" viewBox="0 0 15 910"><rect y="8.70" x="9" height="1" width="6" fill="#8c8c8c"/><rect y="20.70" x="12" height="1" width="3" fill="#8c8c8c"/><rect y="32.70" x="9" height="1" width="6" fill="#8c8c8c"/><rect y="44.70" x="12" height="1" width="3" fill="#8c8c8c"/><rect y="56.70" x="0" height="1" width="15" fill="#8c8c8c"/><rect y="68.70" x="12" height="1" width="3" fill="#8c8c8c"/><rect y="80.70" x="9" height="1" width="6" fill="#8c8c8c"/><rect y="92.70" x="12" height="1" width="3" fill="#8c8c8c"/><rect y="104.70" x="9" height="1" width="6" fill="#8c8c8c"/><rect y="116.70" x="12" height="1" width="3" fill="#8c8c8c"/><rect y="128.70" x="0" height="1" width="15" fill="#8c8c8c"/><rect y="140.70" x="12" height="1" width="3" fill="#8c8c8c"/><rect y="152.70" x="9" height="1" width="6" fill="#8c8c8c"/><rect y="164.70" x="12" height="1" width="3" fill="#8c8c8c"/><rect y="176.70" x="9" height="1" width="6" fill="#8c8c8c"/><rect y="188.70" x="12" height="1" width="3" fill="#8c8c8c"/><rect y="200.70" x="0" height="1" width="15" fill="#8c8c8c"/><rect y="212.70" x="12" height="1" width="3" fill="#8c8c8c"/><rect y="224.70" x="9" height="1" width="6" fill="#8c8c8c"/><rect y="236.70" x="12" height="1" width="3" fill="#8c8c8c"/><rect y="248.70" x="9" height="1" width="6" fill="#8c8c8c"/><rect y="260.70" x="12" height="1" width="3" fill="#8c8c8c"/><rect y="272.70" x="0" height="1" width="15" fill="#8c8c8c"/><rect y="284.70" x="12" height="1" width="3" fill="#8c8c8c"/><rect y="296.70" x="9" height="1" width="6" fill="#8c8c8c"/><rect y="308.70" x="12" height="1" width="3" fill="#8c8c8c"/><rect y="320.70" x="9" height="1" width="6" fill="#8c8c8c"/><rect y="332.70" x="12" height="1" width="3" fill="#8c8c8c"/><rect y="344.70" x="0" height="1" width="15" fill="#8c8c8c"/><rect y="356.70" x="12" height="1" width="3" fill="#8c8c8c"/><rect y="368.70" x="9" height="1" width="6" fill="#8c8c8c"/><rect y="380.70" x="12" height="1" width="3" fill="#8c8c8c"/><rect y="392.70" x="9" height="1" width="6" fill="#8c8c8c"/><rect y="404.70" x="12" height="1" width="3" fill="#8c8c8c"/><rect y="416.70" x="0" height="1" width="15" fill="#8c8c8c"/><rect y="428.70" x="12" height="1" width="3" fill="#8c8c8c"/><rect y="440.70" x="9" height="1" width="6" fill="#8c8c8c"/><rect y="452.70" x="12" height="1" width="3" fill="#8c8c8c"/><rect y="464.70" x="9" height="1" width="6" fill="#8c8c8c"/><rect y="476.70" x="12" height="1" width="3" fill="#8c8c8c"/><rect y="488.70" x="0" height="1" width="15" fill="#8c8c8c"/><rect y="500.70" x="12" height="1" width="3" fill="#8c8c8c"/><rect y="512.70" x="9" height="1" width="6" fill="#8c8c8c"/><rect y="524.70" x="12" height="1" width="3" fill="#8c8c8c"/><rect y="536.70" x="9" height="1" width="6" fill="#8c8c8c"/><rect y="548.70" x="12" height="1" width="3" fill="#8c8c8c"/><rect y="560.70" x="0" height="1" width="15" fill="#8c8c8c"/><rect y="572.70" x="12" height="1" width="3" fill="#8c8c8c"/><rect y="584.70" x="9" height="1" width="6" fill="#8c8c8c"/><rect y="596.70" x="12" height="1" width="3" fill="#8c8c8c"/><rect y="608.70" x="9" height="1" width="6" fill="#8c8c8c"/><rect y="620.70" x="12" height="1" width="3" fill="#8c8c8c"/><rect y="632.70" x="0" height="1" width="15" fill="#8c8c8c"/><rect y="644.70" x="12" height="1" width="3" fill="#8c8c8c"/><rect y="656.70" x="9" height="1" width="6" fill="#8c8c8c"/><rect y="668.70" x="12" height="1" width="3" fill="#8c8c8c"/><rect y="680.70" x="9" height="1" width="6" fill="#8c8c8c"/><rect y="692.70" x="12" height="1" width="3" fill="#8c8c8c"/><rect y="704.70" x="0" height="1" width="15" fill="#8c8c8c"/><rect y="716.70" x="12" height="1" width="3" fill="#8c8c8c"/><rect y="728.70" x="9" height="1" width="6" fill="#8c8c8c"/><rect y="740.70" x="12" height="1" width="3" fill="#8c8c8c"/><rect y="752.70" x="9" height="1" width="6" fill="#8c8c8c"/><rect y="764.70" x="12" height="1" width="3" fill="#8c8c8c"/><rect y="776.70" x="0" height="1" width="15" fill="#8c8c8c"/><rect y="788.70" x="12" height="1" width="3" fill="#8c8c8c"/><rect y="800.70" x="9" height="1" width="6" fill="#8c8c8c"/><rect y="812.70" x="12" height="1" width="3" fill="#8c8c8c"/><rect y="824.70" x="9" height="1" width="6" fill="#8c8c8c"/><rect y="836.70" x="12" height="1" width="3" fill="#8c8c8c"/><rect y="848.70" x="0" height="1" width="15" fill="#8c8c8c"/><rect y="860.70" x="12" height="1" width="3" fill="#8c8c8c"/><rect y="872.70" x="9" height="1" width="6" fill="#8c8c8c"/><rect y="884.70" x="12" height="1" width="3" fill="#8c8c8c"/><rect y="896.70" x="9" height="1" width="6" fill="#8c8c8c"/><rect y="908.70" x="12" height="1" width="3" fill="#8c8c8c"/></svg>
<div class="t" style="left:47.6px;top:152.5px;font-size:11.30px;line-height:15px;color:#d2d2d2;transform-origin:0 50%;transform:scaleX(0.93);will-change:transform;">2</div>
<div class="t" style="left:47.6px;top:161.7px;font-size:11.30px;line-height:15px;color:#d2d2d2;transform-origin:0 50%;transform:scaleX(0.93);will-change:transform;">5</div>
<div class="t" style="left:47.6px;top:170.8px;font-size:11.30px;line-height:15px;color:#d2d2d2;transform-origin:0 50%;transform:scaleX(0.93);will-change:transform;">2</div>
<div class="t" style="left:47.6px;top:224.5px;font-size:11.30px;line-height:15px;color:#d2d2d2;transform-origin:0 50%;transform:scaleX(0.93);will-change:transform;">2</div>
<div class="t" style="left:47.6px;top:233.7px;font-size:11.30px;line-height:15px;color:#d2d2d2;transform-origin:0 50%;transform:scaleX(0.93);will-change:transform;">8</div>
<div class="t" style="left:47.6px;top:242.8px;font-size:11.30px;line-height:15px;color:#d2d2d2;transform-origin:0 50%;transform:scaleX(0.93);will-change:transform;">8</div>
<div class="t" style="left:47.6px;top:296.5px;font-size:11.30px;line-height:15px;color:#d2d2d2;transform-origin:0 50%;transform:scaleX(0.93);will-change:transform;">3</div>
<div class="t" style="left:47.6px;top:305.6px;font-size:11.30px;line-height:15px;color:#d2d2d2;transform-origin:0 50%;transform:scaleX(0.93);will-change:transform;">2</div>
<div class="t" style="left:47.6px;top:314.8px;font-size:11.30px;line-height:15px;color:#d2d2d2;transform-origin:0 50%;transform:scaleX(0.93);will-change:transform;">4</div>
<div class="t" style="left:47.6px;top:368.5px;font-size:11.30px;line-height:15px;color:#d2d2d2;transform-origin:0 50%;transform:scaleX(0.93);will-change:transform;">3</div>
<div class="t" style="left:47.6px;top:377.6px;font-size:11.30px;line-height:15px;color:#d2d2d2;transform-origin:0 50%;transform:scaleX(0.93);will-change:transform;">6</div>
<div class="t" style="left:47.6px;top:386.8px;font-size:11.30px;line-height:15px;color:#d2d2d2;transform-origin:0 50%;transform:scaleX(0.93);will-change:transform;">0</div>
<div class="t" style="left:47.6px;top:440.5px;font-size:11.30px;line-height:15px;color:#d2d2d2;transform-origin:0 50%;transform:scaleX(0.93);will-change:transform;">3</div>
<div class="t" style="left:47.6px;top:449.6px;font-size:11.30px;line-height:15px;color:#d2d2d2;transform-origin:0 50%;transform:scaleX(0.93);will-change:transform;">9</div>
<div class="t" style="left:47.6px;top:458.8px;font-size:11.30px;line-height:15px;color:#d2d2d2;transform-origin:0 50%;transform:scaleX(0.93);will-change:transform;">6</div>
<div class="t" style="left:47.6px;top:512.5px;font-size:11.30px;line-height:15px;color:#d2d2d2;transform-origin:0 50%;transform:scaleX(0.93);will-change:transform;">4</div>
<div class="t" style="left:47.6px;top:521.6px;font-size:11.30px;line-height:15px;color:#d2d2d2;transform-origin:0 50%;transform:scaleX(0.93);will-change:transform;">3</div>
<div class="t" style="left:47.6px;top:530.8px;font-size:11.30px;line-height:15px;color:#d2d2d2;transform-origin:0 50%;transform:scaleX(0.93);will-change:transform;">2</div>
<div class="t" style="left:47.6px;top:584.5px;font-size:11.30px;line-height:15px;color:#d2d2d2;transform-origin:0 50%;transform:scaleX(0.93);will-change:transform;">4</div>
<div class="t" style="left:47.6px;top:593.6px;font-size:11.30px;line-height:15px;color:#d2d2d2;transform-origin:0 50%;transform:scaleX(0.93);will-change:transform;">6</div>
<div class="t" style="left:47.6px;top:602.8px;font-size:11.30px;line-height:15px;color:#d2d2d2;transform-origin:0 50%;transform:scaleX(0.93);will-change:transform;">8</div>
<div class="t" style="left:47.6px;top:656.5px;font-size:11.30px;line-height:15px;color:#d2d2d2;transform-origin:0 50%;transform:scaleX(0.93);will-change:transform;">5</div>
<div class="t" style="left:47.6px;top:665.6px;font-size:11.30px;line-height:15px;color:#d2d2d2;transform-origin:0 50%;transform:scaleX(0.93);will-change:transform;">0</div>
<div class="t" style="left:47.6px;top:674.8px;font-size:11.30px;line-height:15px;color:#d2d2d2;transform-origin:0 50%;transform:scaleX(0.93);will-change:transform;">4</div>
<div class="t" style="left:47.6px;top:728.5px;font-size:11.30px;line-height:15px;color:#d2d2d2;transform-origin:0 50%;transform:scaleX(0.93);will-change:transform;">5</div>
<div class="t" style="left:47.6px;top:737.6px;font-size:11.30px;line-height:15px;color:#d2d2d2;transform-origin:0 50%;transform:scaleX(0.93);will-change:transform;">4</div>
<div class="t" style="left:47.6px;top:746.8px;font-size:11.30px;line-height:15px;color:#d2d2d2;transform-origin:0 50%;transform:scaleX(0.93);will-change:transform;">0</div>
<div class="t" style="left:47.6px;top:800.5px;font-size:11.30px;line-height:15px;color:#d2d2d2;transform-origin:0 50%;transform:scaleX(0.93);will-change:transform;">5</div>
<div class="t" style="left:47.6px;top:809.6px;font-size:11.30px;line-height:15px;color:#d2d2d2;transform-origin:0 50%;transform:scaleX(0.93);will-change:transform;">7</div>
<div class="t" style="left:47.6px;top:818.8px;font-size:11.30px;line-height:15px;color:#d2d2d2;transform-origin:0 50%;transform:scaleX(0.93);will-change:transform;">6</div>
<div class="t" style="left:47.6px;top:872.5px;font-size:11.30px;line-height:15px;color:#d2d2d2;transform-origin:0 50%;transform:scaleX(0.93);will-change:transform;">6</div>
<div class="t" style="left:47.6px;top:881.6px;font-size:11.30px;line-height:15px;color:#d2d2d2;transform-origin:0 50%;transform:scaleX(0.93);will-change:transform;">1</div>
<div class="t" style="left:47.6px;top:890.8px;font-size:11.30px;line-height:15px;color:#d2d2d2;transform-origin:0 50%;transform:scaleX(0.93);will-change:transform;">2</div>
<div class="t" style="left:47.6px;top:944.5px;font-size:11.30px;line-height:15px;color:#d2d2d2;transform-origin:0 50%;transform:scaleX(0.93);will-change:transform;">6</div>
<div class="t" style="left:47.6px;top:953.6px;font-size:11.30px;line-height:15px;color:#d2d2d2;transform-origin:0 50%;transform:scaleX(0.93);will-change:transform;">4</div>
<div class="t" style="left:47.6px;top:962.8px;font-size:11.30px;line-height:15px;color:#d2d2d2;transform-origin:0 50%;transform:scaleX(0.93);will-change:transform;">8</div>
<div class="a" style="left:1632px;top:112px;width:1px;height:926px;background:#2a2a2a"></div>
<svg class="a" style="left:1633px;top:114px;" width="15" height="12" viewBox="0 0 15 12"><path d="M3 9.500h9l-4.500-6z" fill="#dcdcdc"/></svg>
<div class="a" style="left:1633px;top:566px;width:15px;height:17px;background:#232323"></div><div class="a" style="left:1633px;top:567px;width:15px;height:15px;background:#949494;border:1px solid #a4a4a4"></div>
<div class="a" style="left:1633px;top:1021px;width:15px;height:17px;border-top:1px solid #262626"></div>
<svg class="a" style="left:1633px;top:1023px;" width="15" height="12" viewBox="0 0 15 12"><path d="M3.500 3h8l-4 5.500z" fill="#dcdcdc"/></svg>
<div class="a" style="left:46px;top:1038px;width:1602px;height:1px;background:#2a2a2a"></div>
<svg class="a" style="left:52px;top:1041px;" width="22" height="10" viewBox="0 0 22 10"><rect x="1" y="1" width="20" height="12" rx="2" fill="#2e2e2e" stroke="#888" stroke-width="1"/><circle cx="7" cy="8" r="3.500" fill="none" stroke="#ddd" stroke-width="2" stroke-dasharray="1.500 1"/><path d="M12 5l3 3 3-3" stroke="#ddd" stroke-width="1.500" fill="none"/></svg>
<svg class="a" style="left:82px;top:1040px;" width="18" height="10" viewBox="0 0 18 10"><path d="M2 10V3.500h7" fill="none" stroke="#ddd" stroke-width="1.400"/><path d="M9 1l6 4.500-6 4.500V7.500c-3 0-4 1-5 2.500 0-3 1.500-5.500 5-6z" fill="#ddd"/></svg>
<div class="a" style="left:107px;top:1039px;width:41px;height:12px;background:#a4a4a4;border:1px solid #2a2a2a"></div>
<div class="t" style="left:110.0px;top:1040.8px;font-size:11.00px;line-height:14px;color:#111;">200%</div>
<div class="a" style="left:148px;top:1039px;width:16px;height:12px;background:#4e4e4e;border:1px solid #2a2a2a;border-left:none"></div>
<svg class="a" style="left:151px;top:1044px;" width="10" height="6" viewBox="0 0 10 6"><path d="M1.500 1h7l-3.500 4.500z" fill="#dcdcdc"/></svg>
<svg class="a" style="left:172px;top:1042px;" width="30" height="8" viewBox="0 0 30 8"><path d="M3 1v8" stroke="#666" stroke-width="1.500"/><path d="M10 1v8l-6-4z" fill="#666"/><path d="M25 1v8l-6-4z" fill="#666"/></svg>
<div class="a" style="left:208px;top:1039px;width:40px;height:12px;background:#a4a4a4;border:1px solid #2a2a2a"></div>
<div class="t" style="left:211.0px;top:1040.8px;font-size:11.00px;line-height:14px;color:#111;">1</div>
<div class="a" style="left:248px;top:1039px;width:16px;height:12px;background:#4e4e4e;border:1px solid #2a2a2a;border-left:none"></div>
<svg class="a" style="left:251px;top:1044px;" width="10" height="6" viewBox="0 0 10 6"><path d="M1.500 1h7l-3.500 4.500z" fill="#dcdcdc"/></svg>
<svg class="a" style="left:271px;top:1042px;" width="30" height="8" viewBox="0 0 30 8"><path d="M5 1v8l6-4z" fill="#666"/><path d="M20 1v8l6-4z" fill="#666"/><path d="M27.500 1v8" stroke="#666" stroke-width="1.500"/></svg>
<div class="a" style="left:306px;top:1039px;width:1px;height:11px;background:#2a2a2a"></div>
<div class="t" style="left:385.0px;top:1041.3px;font-size:11.00px;line-height:14px;color:#dcdcdc;">Selection</div>
<div class="a" style="left:506px;top:1039px;width:1px;height:11px;background:#2a2a2a"></div>
<svg class="a" style="left:512px;top:1042px;" width="8" height="8" viewBox="0 0 8 8"><path d="M1.500 0.500v8l5.500-4z" fill="#dcdcdc"/></svg>
<div class="a" style="left:524px;top:1039px;width:1108px;height:11px;background:#353535;border-left:1px solid #2a2a2a"></div>
<svg class="a" style="left:530px;top:1042px;" width="8" height="8" viewBox="0 0 8 8"><path d="M6.500 0.500v8l-5.500-4z" fill="#dcdcdc"/></svg>
<div class="a" style="left:1070px;top:1040px;width:17px;height:11px;background:#232323"></div><div class="a" style="left:1071px;top:1040px;width:15px;height:11px;background:#949494;border:1px solid #a4a4a4"></div>
<svg class="a" style="left:1618px;top:1042px;" width="8" height="8" viewBox="0 0 8 8"><path d="M1.500 0.500v8l5.500-4z" fill="#dcdcdc"/></svg>
<div class="a" style="left:1632px;top:1038px;width:16px;height:12px;background:#404040;border-left:1px solid #2a2a2a"></div>
<div class="a" style="left:5px;top:92px;width:39px;height:12px;background:#2d2d2d;border-bottom:1px solid #222"></div>
<div class="a" style="left:5px;top:104px;width:39px;height:1px;background:#646464"></div>
<div class="a" style="left:43px;top:92px;width:1px;height:958px;background:#333"></div>
<svg class="a" style="left:5px;top:92px" width="39" height="958" viewBox="5 92 39 958"><path d="M9 94.500l3.500 3.300-3.500 3.300zM13 94.500l3.500 3.300-3.500 3.300z" fill="#c8c8c8"/><rect x="14" y="107.500" width="1" height="4" fill="#111"/><rect x="16" y="107.500" width="1" height="4" fill="#111"/><rect x="18" y="107.500" width="1" height="4" fill="#111"/><rect x="20" y="107.500" width="1" height="4" fill="#111"/><rect x="22" y="107.500" width="1" height="4" fill="#111"/><rect x="24" y="107.500" width="1" height="4" fill="#111"/><rect x="26" y="107.500" width="1" height="4" fill="#111"/><rect x="28" y="107.500" width="1" height="4" fill="#111"/><rect x="30" y="107.500" width="1" height="4" fill="#111"/><rect x="32" y="107.500" width="1" height="4" fill="#111"/><rect x="10" y="121" width="28" height="22" fill="#2f2f2f" stroke="#3a3a3a" stroke-width="1"/><path d="M19.300 123.200v15.500l3.600-3.200 2.300 5 2.400-1.100-2.300-4.900 4.800-.300z" fill="#1a1a1a" stroke="#d8d8d8" stroke-width="1.200" stroke-linejoin="miter"/><path d="M20 147.500v14.500l3.500-3.100 2.200 4.800 1.900-.900-2.200-4.700 4.300-.300z" fill="#bdbdbd" stroke="#d8d8d8" stroke-width=".600"/><path d="M21.300 170.500l1.200 4 3.600-2-2 3.600 4 1.300-4 1.200 2 3.600-3.600-2-1.200 4-1.300-4-3.600 2 2-3.600-4-1.200 4-1.300-2-3.600 3.600 2z" fill="#c4c4c4"/><path d="M24.500 180.500l7 7" stroke="#c4c4c4" stroke-width="2.200" stroke-linecap="round"/><ellipse cx="24" cy="202.500" rx="7.800" ry="4.800" fill="none" stroke="#c4c4c4" stroke-width="1.500"/><path d="M17.500 205.500c-2 1.500-.500 3.500 1.200 3 1.500-.500 1.600 2 .300 3.300" fill="none" stroke="#c4c4c4" stroke-width="1.300"/><path d="M24.500 198.500v13.500l8.500-6.500z" fill="#c4c4c4" stroke="#484848" stroke-width=".600"/><rect x="9" y="216" width="30" height="1" fill="#3a3a3a"/><rect x="9" y="217" width="30" height="1" fill="#585858"/><g transform="translate(24.300,229.800) rotate(45) scale(1.130)"><path d="M-2.800 -9.500h5.600v3.200h-5.600z" fill="#c4c4c4"/><path d="M-3.200 -5.200h6.400l1 5.200-4.200 9.500-4.200-9.500z" fill="#c4c4c4"/><path d="M0 8.500v-7" stroke="#3a3a3a" stroke-width="1"/><circle cx="0" cy="0.800" r="1.300" fill="#3a3a3a"/></g><path d="M17.700 246.500h12.600v4h-.900c-.200-1.700-.800-2.700-2.600-2.700h-1.800v9.700c0 1 .500 1.400 2 1.500v.800h-6v-.800c1.500-.100 2-.500 2-1.500v-9.700h-1.800c-1.800 0-2.400 1-2.600 2.700h-.900z" fill="#c8c8c8"/><path d="M17.300 284.300L29.700 271.300" stroke="#c8c8c8" stroke-width="1.600"/><defs><linearGradient id="tg1" x1="0" y1="0" x2="0" y2="1"><stop offset="0" stop-color="#6e6e6e"/><stop offset="1" stop-color="#5a5a5a"/></linearGradient><linearGradient id="tg2" x1="0" y1="0" x2="1" y2="0"><stop offset="0" stop-color="#444"/><stop offset="1" stop-color="#b4b4b4"/></linearGradient></defs><rect x="17.300" y="296.500" width="13.500" height="11.300" fill="url(#tg1)" stroke="#b8b8b8" stroke-width="1.200"/><path d="M31.500 318.500c1 .700.800 1.600.200 2.300l-7.200 8.400-1.800-1.600 7.400-8.600c.400-.500 1-.800 1.400-.500z" fill="#c4c4c4"/><path d="M22 328.300l2.200 2c-1 2.500-4.700 3.300-8.700 2.500 2.200-.800 2.700-3.800 6.500-4.500z" fill="#c4c4c4"/><g transform="translate(24,351) rotate(45)"><rect x="-2.600" y="-9.500" width="5.200" height="3" rx="1" fill="#c8c8c8"/><rect x="-2.600" y="-5.800" width="5.200" height="9.500" fill="#8c8c8c" stroke="#c8c8c8" stroke-width=".700"/><path d="M-2.600 4.200h5.200l-2.600 5z" fill="#c8c8c8"/></g><path d="M16 369.500h7c-1.500 2-1.500 4.500 1 5 2.500.400 4-1.500 5.500-3.500h1.500v7.500h-3.500v2.500h-11.500z" fill="#a8a8a8"/><path d="M32.800 366.600c.700.500.600 1.200.100 1.700l-4.500 4.800-1.300-1.100 4.600-5c.300-.400.800-.600 1.100-.400zM26.500 372.600l1.500 1.300c-.800 1.600-3.300 2.100-5.800 1.500 1.500-.500 1.800-2.400 4.300-2.800z" fill="#d8d8d8" stroke="#444" stroke-width=".400"/><path d="M21.500 392.500h10.500l-5.500 7h-10.500z" fill="#c8c8c8"/><path d="M16 399.500h10.500v5h-10.500z" fill="#9a9a9a"/><path d="M26.500 399.500l5.500-7v4.500l-5.500 7.500z" fill="#7e7e7e"/><rect x="9" y="410" width="30" height="1" fill="#3a3a3a"/><rect x="9" y="411" width="30" height="1" fill="#585858"/><circle cx="24" cy="424.500" r="6.300" fill="none" stroke="#c4c4c4" stroke-width="1.500" stroke-dasharray="2.200 1.600"/><path d="M24 418.200a6.300 6.300 0 0 1 6.300 6.300" fill="none" stroke="#c4c4c4" stroke-width="1.500"/><path d="M25 415l-5.200 3.200 5.200 3.200z" fill="#c4c4c4"/><rect x="15.500" y="447.500" width="8" height="7" fill="#5a5a5a" stroke="#c4c4c4" stroke-width="1.100"/><rect x="19.500" y="441.500" width="12" height="10" fill="none" stroke="#c4c4c4" stroke-width="1.100"/><path d="M24.500 449l5-5.300M26.300 443.500h3.400v3.400" fill="none" stroke="#c4c4c4" stroke-width="1.100"/><path d="M17 464.500c2 1 3.500 3.500 3.500 6 1 2 4 3 6.500 1.500 2-1.200 3.500-4 6.500-3-1 1-1.500 3-2.500 4.500-2.500 3.500-8 3.500-11.500 1.500z" fill="#b8b8b8"/><path d="M16 477.500l10.500-11" stroke="#e0e0e0" stroke-width="1"/><circle cx="16.300" cy="477.300" r="1.500" fill="#484848" stroke="#e0e0e0" stroke-width="1"/><circle cx="26.500" cy="466.500" r="1.500" fill="#484848" stroke="#e0e0e0" stroke-width="1"/><circle cx="21" cy="472.300" r="2" fill="#fff" stroke="#333" stroke-width="1"/><path d="M16 489v12.500l7.500-6z" fill="#c4c4c4"/><rect x="20.500" y="491" width="11.500" height="10.500" fill="none" stroke="#c4c4c4" stroke-width="1" stroke-dasharray="1.500 1.200"/><rect x="25" y="489.800" width="2.400" height="2.400" fill="#c4c4c4"/><rect x="30.800" y="489.800" width="2.400" height="2.400" fill="#c4c4c4"/><rect x="30.800" y="495" width="2.400" height="2.400" fill="#c4c4c4"/><rect x="30.800" y="500.300" width="2.400" height="2.400" fill="#c4c4c4"/><rect x="25" y="500.300" width="2.400" height="2.400" fill="#c4c4c4"/><rect x="19.300" y="500.300" width="2.400" height="2.400" fill="#c4c4c4"/><circle cx="19.800" cy="519" r="5" fill="#7a7a7a" stroke="#c4c4c4" stroke-width="1.100"/><circle cx="24.800" cy="518" r="5.300" fill="none" stroke="#c4c4c4" stroke-width="1.100"/><path d="M17 519h8" stroke="#fff" stroke-width="1.200" stroke-dasharray="1.200 1"/><path d="M26.500 517v10.500l7.500-5.800z" fill="#c4c4c4" stroke="#484848" stroke-width=".600"/><path d="M16.500 536v15.500h15.500" fill="none" stroke="#c4c4c4" stroke-width="1.200"/><path d="M16.500 536l3.500 1v12.500l-3.500 2zM21 537.500l3 1.500v9l-3 1.500zM25 539.500l2.500 1.500v6.500l-2.500 1zM20.500 550.500l11.500-1.500v2.500h-15.500z" fill="#a8a8a8"/><path d="M16.500 541.500l11 3M16.500 546.500l11 0" stroke="#484848" stroke-width=".700"/><rect x="9" y="556" width="30" height="1" fill="#3a3a3a"/><rect x="9" y="557" width="30" height="1" fill="#585858"/><rect x="16.300" y="564.300" width="15.400" height="11.400" fill="none" stroke="#c8c8c8" stroke-width="1.200"/><path d="M16.500 568c4-2 6 2 8-1s5-2 7 0M16.500 573c3-2 6 0 8-2s4 0 7-1M21.500 564.500c-2 3 2 5 0 11M27 564.500c2 4-2 6 0 11" fill="none" stroke="#c8c8c8" stroke-width="1"/><rect x="16.300" y="588.800" width="15.400" height="11.400" fill="url(#tg2)" stroke="#c8c8c8" stroke-width="1.200"/><g transform="translate(24,617) rotate(45)"><rect x="-2.300" y="-9.800" width="4.600" height="5" rx="1.500" fill="#d0d0d0"/><rect x="-3.200" y="-5.200" width="6.400" height="2" fill="#d0d0d0"/><path d="M-1.800 -3.200h3.600v8.500l-1.800 3.500-1.800-3.500z" fill="#6a6a6a" stroke="#d0d0d0" stroke-width=".900"/></g><rect x="14.800" y="633.800" width="8" height="8" fill="#b4b4b4"/><rect x="18.500" y="636.500" width="8.500" height="8.500" rx="2.500" fill="#7e7e7e" stroke="#b4b4b4" stroke-width="1"/><circle cx="28.500" cy="644" r="4.300" fill="#5a5a5a" stroke="#c8c8c8" stroke-width="1.200"/><rect x="9" y="655" width="30" height="1" fill="#3a3a3a"/><rect x="9" y="656" width="30" height="1" fill="#585858"/><rect x="22.800" y="663.800" width="9" height="11.800" fill="#5a5a5a" stroke="#c4c4c4" stroke-width="1.100"/><rect x="25.300" y="660" width="4" height="2.600" fill="#c4c4c4"/><circle cx="27.300" cy="670" r="2.600" fill="none" stroke="#c4c4c4" stroke-width="1.300"/><path d="M15 661h1M17 660h1M19 661h1M21 660h1M16 663h1M18 662.500h1M20 663h1M15 665h1M17.500 665h1M20 664.500h1" stroke="#c4c4c4" stroke-width="1"/><path d="M16.500 685v13.500h16" fill="none" stroke="#c4c4c4" stroke-width="1.100"/><rect x="19" y="692" width="3" height="6" fill="#8a8a8a" stroke="#c4c4c4" stroke-width=".800"/><rect x="24" y="687.500" width="3" height="10.500" fill="#8a8a8a" stroke="#c4c4c4" stroke-width=".800"/><rect x="29" y="689.500" width="3" height="8.500" fill="#8a8a8a" stroke="#c4c4c4" stroke-width=".800"/><rect x="9" y="704" width="30" height="1" fill="#3a3a3a"/><rect x="9" y="705" width="30" height="1" fill="#585858"/><rect x="18" y="712.500" width="12" height="10.500" fill="#6a6a6a" stroke="#c4c4c4" stroke-width="1"/><path d="M18 708v3M30 708v3M18 724.500v3M30 724.500v3M13.500 712.500h3M31.500 712.500h3M13.500 723h3M31.500 723h3" stroke="#c4c4c4" stroke-width="1.100"/><path d="M16 749.500l9.500-9 3.500 2.500c-3 3.500-8 5.500-13 6.500z" fill="#c4c4c4"/><path d="M26.500 739.500l3-3h4.500l-4 5.500z" fill="#8a8a8a"/><path d="M20 773.500c-1.500-2-3.300-4.500-4.500-6.300-.600-1 .800-2 1.700-1l2.300 2.500v-7.200c0-1.300 1.800-1.300 1.900 0l.300 4.500.300-6c0-1.300 1.900-1.300 1.900 0l.200 6 .700-5.200c.200-1.200 2-1 1.900.200l-.400 5.800 1.300-3.800c.400-1.100 2-.600 1.800.500-.500 2.500-1.200 5.500-1.500 7-.300 1.300-.800 2-1.300 3z" fill="#c4c4c4"/><circle cx="21.800" cy="787.800" r="5.300" fill="#7a7a7a" stroke="#c8c8c8" stroke-width="1.700"/><path d="M25.800 792l5.200 5.200" stroke="#c8c8c8" stroke-width="2.600" stroke-linecap="round"/><rect x="9" y="802" width="30" height="1" fill="#3a3a3a"/><rect x="9" y="803" width="30" height="1" fill="#585858"/><path d="M37.3 166 v-3.300l-3.300 3.300z" fill="#e0e0e0"/><path d="M37.3 239.5 v-3.300l-3.300 3.300z" fill="#e0e0e0"/><path d="M37.3 263 v-3.300l-3.300 3.300z" fill="#e0e0e0"/><path d="M37.3 288 v-3.300l-3.300 3.300z" fill="#e0e0e0"/><path d="M37.3 312 v-3.300l-3.300 3.300z" fill="#e0e0e0"/><path d="M37.3 361 v-3.300l-3.300 3.300z" fill="#e0e0e0"/><path d="M37.3 408 v-3.300l-3.300 3.300z" fill="#e0e0e0"/><path d="M37.3 433.5 v-3.300l-3.300 3.300z" fill="#e0e0e0"/><path d="M37.3 458 v-3.300l-3.300 3.300z" fill="#e0e0e0"/><path d="M37.3 481.5 v-3.300l-3.300 3.300z" fill="#e0e0e0"/><path d="M37.3 530 v-3.300l-3.300 3.300z" fill="#e0e0e0"/><path d="M37.3 554 v-3.300l-3.300 3.300z" fill="#e0e0e0"/><path d="M37.3 627 v-3.300l-3.300 3.300z" fill="#e0e0e0"/><path d="M37.3 678 v-3.300l-3.300 3.300z" fill="#e0e0e0"/><path d="M37.3 702 v-3.300l-3.300 3.300z" fill="#e0e0e0"/><path d="M37.3 752.5 v-3.300l-3.300 3.300z" fill="#e0e0e0"/><path d="M37.3 776 v-3.300l-3.300 3.300z" fill="#e0e0e0"/><rect x="13.500" y="811" width="7.500" height="7.500" fill="#111" stroke="#d0d0d0" stroke-width="1.200"/><rect x="16" y="813.500" width="2.500" height="2.500" fill="#555"/><rect x="9.800" y="807.300" width="7.500" height="7.500" fill="#e8e8e8" stroke="#222" stroke-width="1"/><path d="M30.500 809.500h4.500c2 0 2.500 1 2.500 2.500v3.500" fill="none" stroke="#777" stroke-width="1.200"/><path d="M31.500 807l-3 2.500 3 2.500zM35 814.500h5l-2.500 3.200z" fill="#777"/><rect x="9.500" y="824.500" width="19" height="19" fill="#454545" stroke="#2a2a2a" stroke-width="1"/><text x="18" y="838.500" font-family="Liberation Sans" font-size="13" fill="#cfe2ff" text-anchor="middle" font-weight="bold">?</text><rect x="19.500" y="834.500" width="19" height="19" fill="#fff" stroke="#2a2a2a" stroke-width="1"/><rect x="25.300" y="840.300" width="7.400" height="7.400" fill="#454545" stroke="#222" stroke-width="1"/><path d="M20.500 852.500L37.500 835.500" stroke="#f0142d" stroke-width="2"/><rect x="10.300" y="860.500" width="9.200" height="9" fill="#1a1a1a"/><rect x="13.200" y="863.300" width="3.600" height="3.600" fill="#5a5a5a"/><defs><linearGradient id="tg3" x1="0" y1="0" x2="1" y2="0"><stop offset="0" stop-color="#fff"/><stop offset="1" stop-color="#333"/></linearGradient></defs><rect x="19.800" y="860.500" width="8.700" height="9" fill="url(#tg3)"/><rect x="29" y="860.500" width="8.500" height="9" fill="#fff"/><path d="M29.300 869.300l8-8.500" stroke="#f0142d" stroke-width="1.800"/><circle cx="22.500" cy="882" r="3.800" fill="#7a7a7a" stroke="#b8b8b8" stroke-width="1"/><rect x="22.800" y="882.800" width="5.800" height="5.800" fill="#c4c4c4"/><rect x="15.500" y="906.500" width="11.500" height="8.500" fill="#4e4e4e" stroke="#c8c8c8" stroke-width="1.100"/><rect x="20.500" y="902.500" width="11.500" height="8.500" fill="#6e6e6e" stroke="#c8c8c8" stroke-width="1.100"/></svg>
<div class="a" style="left:1651px;top:92px;width:29px;height:12px;background:#2e2e2e"></div>
<svg class="a" style="left:1674px;top:94px;" width="6" height="8" viewBox="0 0 6 8"><path d="M5.500 0.500v7l-4.500-3.500z" fill="#d0d0d0"/></svg>
<div class="a" style="left:1651px;top:172px;width:29px;height:1px;background:#2a2a2a"></div><div class="a" style="left:1651px;top:173px;width:29px;height:1px;background:#606060"></div>
<div class="a" style="left:1651px;top:268px;width:29px;height:1px;background:#2a2a2a"></div><div class="a" style="left:1651px;top:269px;width:29px;height:1px;background:#606060"></div>
<div class="a" style="left:1651px;top:450px;width:29px;height:1px;background:#2a2a2a"></div><div class="a" style="left:1651px;top:451px;width:29px;height:1px;background:#606060"></div>
<svg class="a" style="left:1660px;top:107.5px;" width="20" height="4" viewBox="0 0 20 4"><rect x="0" y="0" width="1" height="3.500" fill="#111"/><rect x="2" y="0" width="1" height="3.500" fill="#111"/><rect x="4" y="0" width="1" height="3.500" fill="#111"/><rect x="6" y="0" width="1" height="3.500" fill="#111"/><rect x="8" y="0" width="1" height="3.500" fill="#111"/><rect x="10" y="0" width="1" height="3.500" fill="#111"/><rect x="12" y="0" width="1" height="3.500" fill="#111"/><rect x="14" y="0" width="1" height="3.500" fill="#111"/><rect x="16" y="0" width="1" height="3.500" fill="#111"/><rect x="18" y="0" width="1" height="3.500" fill="#111"/><rect x="20" y="0" width="1" height="3.500" fill="#111"/></svg>
<svg class="a" style="left:1660px;top:176.5px;" width="20" height="4" viewBox="0 0 20 4"><rect x="0" y="0" width="1" height="3.500" fill="#111"/><rect x="2" y="0" width="1" height="3.500" fill="#111"/><rect x="4" y="0" width="1" height="3.500" fill="#111"/><rect x="6" y="0" width="1" height="3.500" fill="#111"/><rect x="8" y="0" width="1" height="3.500" fill="#111"/><rect x="10" y="0" width="1" height="3.500" fill="#111"/><rect x="12" y="0" width="1" height="3.500" fill="#111"/><rect x="14" y="0" width="1" height="3.500" fill="#111"/><rect x="16" y="0" width="1" height="3.500" fill="#111"/><rect x="18" y="0" width="1" height="3.500" fill="#111"/><rect x="20" y="0" width="1" height="3.500" fill="#111"/></svg>
<svg class="a" style="left:1660px;top:273.5px;" width="20" height="4" viewBox="0 0 20 4"><rect x="0" y="0" width="1" height="3.500" fill="#111"/><rect x="2" y="0" width="1" height="3.500" fill="#111"/><rect x="4" y="0" width="1" height="3.500" fill="#111"/><rect x="6" y="0" width="1" height="3.500" fill="#111"/><rect x="8" y="0" width="1" height="3.500" fill="#111"/><rect x="10" y="0" width="1" height="3.500" fill="#111"/><rect x="12" y="0" width="1" height="3.500" fill="#111"/><rect x="14" y="0" width="1" height="3.500" fill="#111"/><rect x="16" y="0" width="1" height="3.500" fill="#111"/><rect x="18" y="0" width="1" height="3.500" fill="#111"/><rect x="20" y="0" width="1" height="3.500" fill="#111"/></svg>
<svg class="a" style="left:1651px;top:104px" width="29" height="360" viewBox="1651 104 29 360"><rect x="1662" y="121" width="18" height="1" fill="#d0d0d0"/><rect x="1662" y="125" width="18" height="2" fill="#d0d0d0"/><rect x="1662" y="129.500" width="18" height="3.500" fill="#d0d0d0"/><rect x="1667" y="157" width="8" height="7.500" fill="#b4b4b4"/><path d="M1669.800 157v-7c-.800-.500-.800-3.500 0-3.800h1.400c.800.300.800 3.300 0 3.800v7z" fill="#d0d0d0"/><path d="M1668 157c-1.500-2.500-3.500-3.500-4.500-6-.500-1.500.500-3 .800-3.800 1 1.500 2.500 2.500 3 4 .500 1.500 1.200 3.800 1.700 5.800z" fill="#d0d0d0"/><path d="M1673.500 157c.300-2 .800-3.500 2.200-4.500-1.500-1-2.300-2.500-1-3.800 1.500-1.500 4-1 5 .500.800 1.300 0 3-2 3.500-1.500.500-2.500 2-3 4.300z" fill="#d0d0d0"/><rect x="1662.500" y="191.500" width="15.500" height="10.500" fill="#8a8a8a" stroke="#d0d0d0" stroke-width="1"/><rect x="1663.500" y="192.500" width="4" height="3.800" fill="#222"/><rect x="1668.500" y="192.500" width="4" height="3.800" fill="#555"/><rect x="1673.500" y="192.500" width="4" height="3.800" fill="#9a9a9a"/><rect x="1663.500" y="197.500" width="4" height="3.800" fill="#707070"/><rect x="1668.500" y="197.500" width="4" height="3.800" fill="#444"/><rect x="1673.500" y="197.500" width="4" height="3.800" fill="#333"/><path d="M1668 192v10M1673 192v10M1662.500 196.800h15.500" stroke="#d0d0d0" stroke-width="1"/><path d="M1662.500 232.500v-16h6l1.500 2.300h8.500v13.700z" fill="#4a4a4a" stroke="#d0d0d0" stroke-width="1.100"/><rect x="1664.500" y="223" width="12" height="4.500" fill="none" stroke="#d0d0d0" stroke-width=".800"/><rect x="1665.300" y="223.800" width="3" height="3" fill="#222"/><rect x="1669" y="223.800" width="3" height="3" fill="#777"/><rect x="1672.700" y="223.800" width="3" height="3" fill="#999"/><path d="M1671 245c5.500 0 9.500 3 9.500 6.800 0 3.800-3.500 7-9.500 7-6.500 0-10-3-10-6.500 0-2 1.500-2.500 2.500-2.200 1.500.500 2.500 0 2.500-1.500 0-2.300 2.500-3.600 5-3.600z" fill="#d0d0d0"/><circle cx="1674" cy="248.500" r="1.400" fill="#444"/><circle cx="1678" cy="252" r="1.400" fill="#444"/><circle cx="1675.500" cy="255.500" r="1.400" fill="#444"/><circle cx="1670.500" cy="256" r="1.400" fill="#444"/><circle cx="1666" cy="254" r="1.300" fill="#444"/><text x="1661.500" y="301" font-family="Liberation Serif" font-style="italic" font-weight="bold" font-size="21" fill="#d0d0d0">A</text><path d="M1663 290c1.500-2.500 5-3.500 7-2" fill="none" stroke="#d0d0d0" stroke-width="1.300"/><text x="1662.500" y="327.300" font-family="Liberation Sans" font-size="18" fill="#d0d0d0">A</text><rect x="1676.300" y="312.500" width="1.200" height="17" fill="#d0d0d0"/><circle cx="1667.500" cy="348" r="6.600" fill="#b4b4b4"/><circle cx="1672.500" cy="352.500" r="6" fill="rgba(120,120,120,.6)" stroke="#d0d0d0" stroke-width="1.500"/><path d="M1663 371v13.500l15.700-6.700z" fill="#d0d0d0"/><defs><linearGradient id="dg1" x1="0" y1="0" x2="1" y2="0"><stop offset="0" stop-color="#3a3a3a"/><stop offset="1" stop-color="#c8c8c8"/></linearGradient></defs><rect x="1662.200" y="399.300" width="18" height="11.200" fill="url(#dg1)" stroke="#d0d0d0" stroke-width="1.100"/><rect x="1655.500" y="421.800" width="30" height="23" rx="3" fill="#2c2c2c" stroke="#3c3c3c" stroke-width="1"/><path d="M1670.500 432l-8.500 4.300 8.500 4.700 8.500-4.700z" fill="#9a9a9a" stroke="#e0e0e0" stroke-width=".800"/><path d="M1670.500 425l-8.800 4.600 8.800 4.800 8.800-4.800z" fill="#e4e4e4"/></svg>
<div class="a" style="left:1368px;top:267px;width:281px;height:183px;background:#4a4a4a;border:1px solid #222;box-shadow:0 0 0 1px rgba(0,0,0,.25)"></div>
<div class="a" style="left:1369px;top:268px;width:279px;height:3px;background:#1f1f1f"></div>
<div class="a" style="left:1369px;top:271px;width:279px;height:17px;background:#343434;border-bottom:1px solid #282828"></div>
<div class="a" style="left:1369px;top:271px;width:34px;height:16px;background:linear-gradient(#404040,#363636);border-right:1px solid #262626;border-top:1px solid #4a4a4a;overflow:hidden"><div class="t" style="left:6.500px;top:1px;font-size:12px;line-height:14px;font-weight:bold;color:#bebebe;transform-origin:0 0;transform:scaleX(0.820)">Glyphs</div></div>
<div class="a" style="left:1403px;top:271px;width:33px;height:16px;background:linear-gradient(#404040,#363636);border-right:1px solid #262626;border-top:1px solid #4a4a4a;overflow:hidden"><div class="t" style="left:6.500px;top:1px;font-size:12px;line-height:14px;font-weight:bold;color:#bebebe;transform-origin:0 0;transform:scaleX(0.820)">Character</div></div>
<div class="a" style="left:1436px;top:271px;width:33px;height:16px;background:linear-gradient(#404040,#363636);border-right:1px solid #262626;border-top:1px solid #4a4a4a;overflow:hidden"><div class="t" style="left:6.500px;top:1px;font-size:12px;line-height:14px;font-weight:bold;color:#bebebe;transform-origin:0 0;transform:scaleX(0.820)">Transform</div></div>
<div class="a" style="left:1469px;top:271px;width:33px;height:16px;background:linear-gradient(#404040,#363636);border-right:1px solid #262626;border-top:1px solid #4a4a4a;overflow:hidden"><div class="t" style="left:6.500px;top:1px;font-size:12px;line-height:14px;font-weight:bold;color:#bebebe;transform-origin:0 0;transform:scaleX(0.820)">Actions</div></div>
<div class="a" style="left:1502px;top:271px;width:33px;height:16px;background:linear-gradient(#404040,#363636);border-right:1px solid #262626;border-top:1px solid #4a4a4a;overflow:hidden"><div class="t" style="left:6.500px;top:1px;font-size:12px;line-height:14px;font-weight:bold;color:#bebebe;transform-origin:0 0;transform:scaleX(0.820)">Gradient</div></div>
<div class="a" style="left:1535px;top:270.500px;width:46px;height:18px;background:#4a4a4a;border-top:1px solid #626262;border-left:1px solid #5a5a5a;border-right:1px solid #2a2a2a"></div>
<div class="t" style="left:1541.5px;top:272.8px;font-size:10.17px;line-height:13px;color:#f2f2f2;font-weight:bold;">Layers</div>
<svg class="a" style="left:1607px;top:274px;" width="42" height="11" viewBox="0 0 42 11"><path d="M1.500 1l4.500 4.500-4.500 4.500zM6.800 1l4.500 4.500-4.500 4.500z" fill="#d8d8d8"/><path d="M17.500 0v11" stroke="#5a5a5a" stroke-width="1"/><path d="M19.700 0v11" stroke="#5a5a5a" stroke-width="1"/><path d="M23.500 4h5l-2.500 3z" fill="#d8d8d8"/><path d="M29.500 1.500h8.500M29.500 4h8.500M29.500 6.500h8.500M29.500 9h8.500" stroke="#d8d8d8" stroke-width="1"/></svg>
<div class="a" style="left:1374px;top:294px;width:270px;height:128px;background:#4a4a4a;border:1px solid #2c2c2c"></div>
<div class="a" style="left:1375px;top:295px;width:268px;height:20px;background:#535353;border-bottom:1px solid #333"></div>
<div class="a" style="left:1375px;top:315px;width:268px;height:1px;background:#333"></div>
<div class="a" style="left:1395px;top:295px;width:1px;height:20px;background:#3a3a3a"></div>
<div class="a" style="left:1416px;top:295px;width:1px;height:20px;background:#3a3a3a"></div>
<div class="a" style="left:1608px;top:295px;width:1px;height:20px;background:#3a3a3a"></div>
<svg class="a" style="left:1377.2px;top:300.5px;" width="14" height="9" viewBox="0 0 14 9"><path d="M0.500 4.500c2-3 4.500-4 6.500-4s4.500 1 6.500 4c-2 3-4.500 4-6.500 4s-4.500-1-6.500-4z" fill="#c4c4c4" stroke="#2e2e2e" stroke-width=".600"/><circle cx="7" cy="4.300" r="3.100" fill="#3a3a3a"/><circle cx="7" cy="4.300" r="1.500" fill="#111"/><circle cx="8" cy="3.300" r=".900" fill="#e8e8e8"/></svg>
<div class="a" style="left:1417.500px;top:296px;width:4px;height:18px;background:#4fff4f"></div>
<svg class="a" style="left:1426px;top:302px;" width="10" height="7" viewBox="0 0 10 7"><path d="M0.800 0.800h8l-4 5.200z" fill="#e0e0e0"/></svg>
<div class="a" style="left:1444px;top:296px;width:18px;height:18px;background:#fff;border:1px solid #000"></div>
<div class="a" style="left:1445px;top:300px;width:16px;height:10px;background:#0f4538"></div>
<div class="a" style="left:1449px;top:303px;width:5px;height:4px;background:#f08a1e"></div>
<div class="t" style="left:1467.5px;top:299.2px;font-size:10.49px;line-height:14px;color:#ececec;">Layer 88</div>
<svg class="a" style="left:1612.5px;top:299px;" width="12" height="12" viewBox="0 0 12 12"><circle cx="6" cy="6" r="4.100" fill="none" stroke="#d0d0d0" stroke-width="1.100"/></svg>
<div class="a" style="left:1629px;top:301.5px;width:7px;height:7px;background:#4fff4f;border:1px solid #000"></div>
<svg class="a" style="left:1638px;top:295px;" width="5" height="5" viewBox="0 0 5 5"><path d="M0 0h5v5z" fill="#d8d8d8"/></svg>
<div class="a" style="left:1375px;top:316px;width:268px;height:20px;background:#595959;border-bottom:1px solid #333"></div>
<div class="a" style="left:1375px;top:336px;width:268px;height:1px;background:#333"></div>
<div class="a" style="left:1395px;top:316px;width:1px;height:20px;background:#3a3a3a"></div>
<div class="a" style="left:1416px;top:316px;width:1px;height:20px;background:#3a3a3a"></div>
<div class="a" style="left:1608px;top:316px;width:1px;height:20px;background:#3a3a3a"></div>
<svg class="a" style="left:1377.2px;top:321.5px;" width="14" height="9" viewBox="0 0 14 9"><path d="M0.500 4.500c2-3 4.500-4 6.500-4s4.500 1 6.500 4c-2 3-4.500 4-6.500 4s-4.500-1-6.500-4z" fill="#c4c4c4" stroke="#2e2e2e" stroke-width=".600"/><circle cx="7" cy="4.300" r="3.100" fill="#3a3a3a"/><circle cx="7" cy="4.300" r="1.500" fill="#111"/><circle cx="8" cy="3.300" r=".900" fill="#e8e8e8"/></svg>
<div class="a" style="left:1417.500px;top:317px;width:4px;height:18px;background:#4fff4f"></div>
<svg class="a" style="left:1447px;top:322px;" width="7" height="9" viewBox="0 0 7 9"><path d="M0.800 0.500v8l5.500-4z" fill="#e0e0e0"/></svg>
<div class="a" style="left:1464px;top:317px;width:18px;height:18px;background:#fff;border:1px solid #000"></div>
<div class="a" style="left:1470px;top:318.5px;width:6px;height:15px;background:linear-gradient(#e8501e,#f08a1e 20%,#e8501e 38%,#f08a1e 55%,#e8501e 72%,#f08a1e)"></div>
<div class="t" style="left:1488.0px;top:319.2px;font-size:11.02px;line-height:14px;color:#ececec;">&lt;Group&gt;</div>
<svg class="a" style="left:1610.5px;top:318px;" width="16" height="16" viewBox="0 0 16 16"><circle cx="8" cy="8" r="6.500" fill="none" stroke="#d0d0d0" stroke-width="1"/><circle cx="8" cy="8" r="4" fill="none" stroke="#d0d0d0" stroke-width="1.100"/></svg>
<div class="a" style="left:1629px;top:321.5px;width:9px;height:9px;background:#4fff4f;border:1px solid #000"></div>
<div class="a" style="left:1375px;top:337px;width:268px;height:20px;background:#535353;border-bottom:1px solid #333"></div>
<div class="a" style="left:1375px;top:357px;width:268px;height:1px;background:#333"></div>
<div class="a" style="left:1395px;top:337px;width:1px;height:20px;background:#3a3a3a"></div>
<div class="a" style="left:1416px;top:337px;width:1px;height:20px;background:#3a3a3a"></div>
<div class="a" style="left:1608px;top:337px;width:1px;height:20px;background:#3a3a3a"></div>
<svg class="a" style="left:1377.2px;top:342.5px;" width="14" height="9" viewBox="0 0 14 9"><path d="M0.500 4.500c2-3 4.500-4 6.500-4s4.500 1 6.500 4c-2 3-4.500 4-6.500 4s-4.500-1-6.500-4z" fill="#c4c4c4" stroke="#2e2e2e" stroke-width=".600"/><circle cx="7" cy="4.300" r="3.100" fill="#3a3a3a"/><circle cx="7" cy="4.300" r="1.500" fill="#111"/><circle cx="8" cy="3.300" r=".900" fill="#e8e8e8"/></svg>
<div class="a" style="left:1417.500px;top:338px;width:4px;height:18px;background:#4fff4f"></div>
<svg class="a" style="left:1447px;top:343px;" width="7" height="9" viewBox="0 0 7 9"><path d="M0.800 0.500v8l5.500-4z" fill="#e0e0e0"/></svg>
<div class="a" style="left:1464px;top:338px;width:18px;height:18px;background:#fff;border:1px solid #000"></div>
<div class="a" style="left:1470px;top:339.5px;width:6px;height:15px;background:linear-gradient(#e8501e,#f08a1e 20%,#e8501e 38%,#f08a1e 55%,#e8501e 72%,#f08a1e)"></div>
<div class="t" style="left:1488.0px;top:340.2px;font-size:11.02px;line-height:14px;color:#ececec;">&lt;Group&gt;</div>
<svg class="a" style="left:1612.5px;top:341px;" width="12" height="12" viewBox="0 0 12 12"><circle cx="6" cy="6" r="4.100" fill="none" stroke="#d0d0d0" stroke-width="1.100"/></svg>
<div class="a" style="left:1375px;top:358px;width:268px;height:20px;background:#535353;border-bottom:1px solid #333"></div>
<div class="a" style="left:1375px;top:378px;width:268px;height:1px;background:#333"></div>
<div class="a" style="left:1395px;top:358px;width:1px;height:20px;background:#3a3a3a"></div>
<div class="a" style="left:1416px;top:358px;width:1px;height:20px;background:#3a3a3a"></div>
<div class="a" style="left:1608px;top:358px;width:1px;height:20px;background:#3a3a3a"></div>
<svg class="a" style="left:1377.2px;top:363.5px;" width="14" height="9" viewBox="0 0 14 9"><path d="M0.500 4.500c2-3 4.500-4 6.500-4s4.500 1 6.500 4c-2 3-4.500 4-6.500 4s-4.500-1-6.500-4z" fill="#c4c4c4" stroke="#2e2e2e" stroke-width=".600"/><circle cx="7" cy="4.300" r="3.100" fill="#3a3a3a"/><circle cx="7" cy="4.300" r="1.500" fill="#111"/><circle cx="8" cy="3.300" r=".900" fill="#e8e8e8"/></svg>
<div class="a" style="left:1417.500px;top:359px;width:4px;height:18px;background:#4fff4f"></div>
<svg class="a" style="left:1447px;top:364px;" width="7" height="9" viewBox="0 0 7 9"><path d="M0.800 0.500v8l5.500-4z" fill="#e0e0e0"/></svg>
<div class="a" style="left:1464px;top:359px;width:18px;height:18px;background:#fff;border:1px solid #000"></div>
<div class="a" style="left:1470px;top:360.5px;width:6px;height:15px;background:linear-gradient(#e8501e,#f08a1e 20%,#e8501e 38%,#f08a1e 55%,#e8501e 72%,#f08a1e)"></div>
<div class="t" style="left:1488.0px;top:361.2px;font-size:11.02px;line-height:14px;color:#ececec;">&lt;Group&gt;</div>
<svg class="a" style="left:1612.5px;top:362px;" width="12" height="12" viewBox="0 0 12 12"><circle cx="6" cy="6" r="4.100" fill="none" stroke="#d0d0d0" stroke-width="1.100"/></svg>
<div class="a" style="left:1375px;top:379px;width:268px;height:20px;background:#535353;border-bottom:1px solid #333"></div>
<div class="a" style="left:1375px;top:399px;width:268px;height:1px;background:#333"></div>
<div class="a" style="left:1395px;top:379px;width:1px;height:20px;background:#3a3a3a"></div>
<div class="a" style="left:1416px;top:379px;width:1px;height:20px;background:#3a3a3a"></div>
<div class="a" style="left:1608px;top:379px;width:1px;height:20px;background:#3a3a3a"></div>
<svg class="a" style="left:1377.2px;top:384.5px;" width="14" height="9" viewBox="0 0 14 9"><path d="M0.500 4.500c2-3 4.500-4 6.500-4s4.500 1 6.500 4c-2 3-4.500 4-6.500 4s-4.500-1-6.500-4z" fill="#c4c4c4" stroke="#2e2e2e" stroke-width=".600"/><circle cx="7" cy="4.300" r="3.100" fill="#3a3a3a"/><circle cx="7" cy="4.300" r="1.500" fill="#111"/><circle cx="8" cy="3.300" r=".900" fill="#e8e8e8"/></svg>
<div class="a" style="left:1417.500px;top:380px;width:4px;height:18px;background:#4fff4f"></div>
<div class="a" style="left:1464px;top:380px;width:18px;height:18px;background:#fff;border:1px solid #000"></div>
<div class="a" style="left:1465px;top:383.5px;width:16px;height:11px;background:#0f4538"></div>
<div class="t" style="left:1488.0px;top:382.2px;font-size:10.85px;line-height:14px;color:#ececec;">&lt;Path&gt;</div>
<svg class="a" style="left:1401px;top:383px;" width="10" height="11" viewBox="0 0 10 11"><path d="M2.500 5v-2a2.500 2.500 0 0 1 5 0v2" fill="none" stroke="#c8c8c8" stroke-width="1.400"/><rect x="1" y="5" width="8" height="5.500" rx=".800" fill="#c8c8c8"/><rect x="4.400" y="6.500" width="1.200" height="2.500" fill="#555"/></svg>
<svg class="a" style="left:1612.5px;top:383px;" width="12" height="12" viewBox="0 0 12 12"><circle cx="6" cy="6" r="4.100" fill="none" stroke="#d0d0d0" stroke-width="1.100"/></svg>
<div class="t" style="left:1374.5px;top:425.5px;font-size:10.49px;line-height:14px;color:#e0e0e0;">1 Layer</div>
<svg class="a" style="left:1505px;top:425px;" width="16" height="15" viewBox="0 0 16 15"><circle cx="9.500" cy="5.500" r="3.800" fill="none" stroke="#d8d8d8" stroke-width="1.300"/><path d="M6.800 8.300l-4.800 5" stroke="#d8d8d8" stroke-width="1.500"/></svg>
<svg class="a" style="left:1531px;top:426px;" width="13" height="12" viewBox="0 0 13 12"><rect x="1" y="1" width="7" height="7" fill="#5a5a5a" stroke="#6e6e6e"/><rect x="4.500" y="4.500" width="7" height="7" fill="none" stroke="#6e6e6e"/></svg>
<svg class="a" style="left:1556px;top:426px;" width="16" height="12" viewBox="0 0 16 12"><path d="M1 2.500h4v5h3" fill="none" stroke="#6e6e6e" stroke-width="1.200"/><path d="M6 2l-3 2 3 2" fill="none" stroke="#6e6e6e"/><rect x="8" y="3.500" width="7" height="7" fill="#6e6e6e"/></svg>
<svg class="a" style="left:1584px;top:426px;" width="12" height="12" viewBox="0 0 12 12"><path d="M1.500 1.500h9v9h-5.500l-3.500-3.500z" fill="#e0e0e0"/><path d="M1.500 7h3.500v3.500" fill="#4a4a4a" stroke="#e0e0e0" stroke-width=".800"/></svg>
<svg class="a" style="left:1609px;top:424px;" width="13" height="15" viewBox="0 0 13 15"><path d="M1 3.500h11M4.500 3.500v-1.500h4v1.500M2.500 3.500l.800 10h6.400l.800-10" fill="none" stroke="#6a6a6a" stroke-width="1.100"/><path d="M5 6v5.500M6.500 6v5.500M8 6v5.500" stroke="#6a6a6a" stroke-width=".800"/></svg>
<svg class="a" style="left:1636px;top:429px;" width="9" height="9" viewBox="0 0 9 9"><g fill="#161616" shape-rendering="crispEdges"><rect x="8" y="0" width="1" height="1"/><rect x="8" y="2" width="1" height="1"/><rect x="6" y="2" width="1" height="1"/><rect x="8" y="4" width="1" height="1"/><rect x="6" y="4" width="1" height="1"/><rect x="4" y="4" width="1" height="1"/><rect x="8" y="6" width="1" height="1"/><rect x="6" y="6" width="1" height="1"/><rect x="4" y="6" width="1" height="1"/><rect x="2" y="6" width="1" height="1"/><rect x="8" y="8" width="1" height="1"/><rect x="6" y="8" width="1" height="1"/><rect x="4" y="8" width="1" height="1"/><rect x="2" y="8" width="1" height="1"/><rect x="0" y="8" width="1" height="1"/></g></svg>
<div class="a" style="left:1369px;top:441px;width:279px;height:1px;background:#2e2e2e"></div>
<div class="a" style="left:1369px;top:442px;width:279px;height:7px;background:#454545"></div>
<svg class="a" style="left:1499px;top:443px;" width="20" height="4" viewBox="0 0 20 4"><rect x="0" y="0" width="1" height="3" fill="#111"/><rect x="2" y="0" width="1" height="3" fill="#111"/><rect x="4" y="0" width="1" height="3" fill="#111"/><rect x="6" y="0" width="1" height="3" fill="#111"/><rect x="8" y="0" width="1" height="3" fill="#111"/><rect x="10" y="0" width="1" height="3" fill="#111"/><rect x="12" y="0" width="1" height="3" fill="#111"/><rect x="14" y="0" width="1" height="3" fill="#111"/><rect x="16" y="0" width="1" height="3" fill="#111"/><rect x="18" y="0" width="1" height="3" fill="#111"/></svg>
<!--UI6-->
</body></html>
